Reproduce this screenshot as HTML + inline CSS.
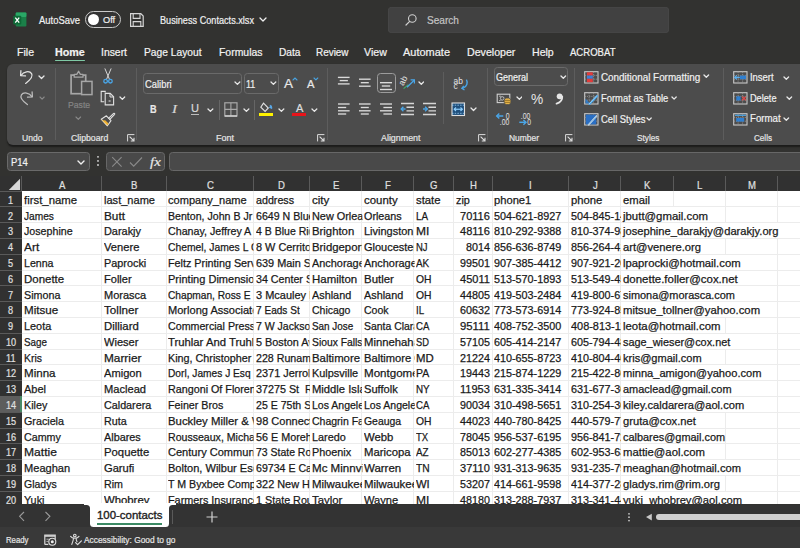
<!DOCTYPE html>
<html><head><meta charset="utf-8"><style>
*{box-sizing:border-box;margin:0;padding:0}
html,body{width:800px;height:548px;overflow:hidden;background:#323230;font-family:"Liberation Sans",sans-serif;position:relative}
.a{position:absolute}
.t{position:absolute;white-space:pre}
</style></head><body>
<svg class="a" style="left:12px;top:12px;" width="16" height="16" viewBox="0 0 16 16"><rect x="3.7" y="0.6" width="10.7" height="13.8" rx="1" fill="#1b8049"/><rect x="3.7" y="0.6" width="10.7" height="4.5" rx="1" fill="#2aa866"/><rect x="1.2" y="3.7" width="8.1" height="8.7" rx="1" fill="#0e6a37"/><path d="M3.3 5.6l3.9 5M7.2 5.6l-3.9 5" stroke="#fff" stroke-width="1.3"/></svg>
<div class="a" style="left:84.8px;top:11.4px;width:36.3px;height:16.8px;border:1.4px solid #c9c9c9;border-radius:9px;background:#333"></div>
<div class="a" style="left:87.7px;top:14px;width:11.3px;height:11.3px;background:#fff;border-radius:50%"></div>
<svg class="a" style="left:129px;top:12px;" width="16" height="16" viewBox="0 0 16 16"><path d="M1.6 1.6h10.2l2.4 2.4v10.4H1.6z" fill="none" stroke="#d6d6d6" stroke-width="1.2"/><path d="M4.2 1.6v4.8h6.8V1.6" fill="none" stroke="#d6d6d6" stroke-width="1.1"/><path d="M4.2 14.4V9.6h7.6v4.8" fill="none" stroke="#d6d6d6" stroke-width="1.1"/></svg>
<svg class="a" style="left:258.5px;top:16.5px;" width="8" height="5.0" viewBox="0 0 8 5.0"><path d="M1 1L4.0 4.0L7 1" fill="none" stroke="#f0f0f0" stroke-width="1.3" stroke-linecap="round" stroke-linejoin="round"/></svg>
<div class="a" style="left:388px;top:7px;width:281px;height:26px;background:#414141;border-radius:4px;box-shadow:inset 0 0 0 0.6px #4a4a4a"></div>
<svg class="a" style="left:403.5px;top:12.5px;" width="14" height="14" viewBox="0 0 14 14"><circle cx="8.3" cy="5.5" r="3.8" fill="none" stroke="#d0d0d0" stroke-width="1.1"/><path d="M5.7 8.3L2 12" stroke="#d0d0d0" stroke-width="1.2" stroke-linecap="round"/></svg>
<div class="a" style="left:54.8px;top:59.5px;width:30.5px;height:1.9px;background:#7fc9a5;border-radius:1px"></div>
<div class="a" style="left:7px;top:64px;width:800px;height:80.8px;background:#4c4c4c;border-radius:6px;box-shadow:0 1.5px 1.5px rgba(0,0,0,0.45)"></div>
<div class="a" style="left:54.8px;top:68px;width:1px;height:71.5px;background:#5d5d5d"></div>
<div class="a" style="left:136.0px;top:68px;width:1px;height:71.5px;background:#5d5d5d"></div>
<div class="a" style="left:326.7px;top:68px;width:1px;height:71.5px;background:#5d5d5d"></div>
<div class="a" style="left:487.15px;top:68px;width:1px;height:71.5px;background:#5d5d5d"></div>
<div class="a" style="left:574.0px;top:68px;width:1px;height:71.5px;background:#5d5d5d"></div>
<div class="a" style="left:723.0px;top:68px;width:1px;height:71.5px;background:#5d5d5d"></div>
<svg class="a" style="left:127px;top:133.5px;" width="8" height="8" viewBox="0 0 8 8"><path d="M0.6 7.4V0.6h6.8" fill="none" stroke="#dcdcdc" stroke-width="1"/><path d="M2.6 2.6L7 7M7 3.8V7H3.8" fill="none" stroke="#dcdcdc" stroke-width="1.1"/></svg>
<svg class="a" style="left:317.3px;top:133.5px;" width="8" height="8" viewBox="0 0 8 8"><path d="M0.6 7.4V0.6h6.8" fill="none" stroke="#dcdcdc" stroke-width="1"/><path d="M2.6 2.6L7 7M7 3.8V7H3.8" fill="none" stroke="#dcdcdc" stroke-width="1.1"/></svg>
<svg class="a" style="left:477.6px;top:133.5px;" width="8" height="8" viewBox="0 0 8 8"><path d="M0.6 7.4V0.6h6.8" fill="none" stroke="#dcdcdc" stroke-width="1"/><path d="M2.6 2.6L7 7M7 3.8V7H3.8" fill="none" stroke="#dcdcdc" stroke-width="1.1"/></svg>
<svg class="a" style="left:564.8px;top:133.5px;" width="8" height="8" viewBox="0 0 8 8"><path d="M0.6 7.4V0.6h6.8" fill="none" stroke="#dcdcdc" stroke-width="1"/><path d="M2.6 2.6L7 7M7 3.8V7H3.8" fill="none" stroke="#dcdcdc" stroke-width="1.1"/></svg>
<svg class="a" style="left:18px;top:68px;" width="17" height="18" viewBox="0 0 17 18"><path d="M3.1 7.4C5.6 3.5 11.5 2.3 13.6 5.7C15.3 8.5 12 12.2 7.6 15.4" fill="none" stroke="#e3e3e3" stroke-width="1.25" stroke-linecap="round"/><path d="M2.9 2.7L2.6 7.6L7.5 7.9" fill="none" stroke="#e3e3e3" stroke-width="1.25" stroke-linecap="round" stroke-linejoin="round"/></svg>
<svg class="a" style="left:38.2px;top:75.3px;" width="7" height="4.5" viewBox="0 0 7 4.5"><path d="M1 1L3.5 3.5L6 1" fill="none" stroke="#e8e8e8" stroke-width="1.3" stroke-linecap="round" stroke-linejoin="round"/></svg>
<svg class="a" style="left:18px;top:89px;" width="17" height="18" viewBox="0 0 17 18"><path d="M13.9 7.6C11.4 3.7 5.5 2.5 3.4 5.9C1.7 8.7 5 12.4 9.4 15.6" fill="none" stroke="#bdbdbd" stroke-width="1.25" stroke-linecap="round"/><path d="M14.1 2.9L14.4 7.8L9.5 8.1" fill="none" stroke="#bdbdbd" stroke-width="1.25" stroke-linecap="round" stroke-linejoin="round"/></svg>
<svg class="a" style="left:39px;top:96px;" width="6.2" height="4.1" viewBox="0 0 6.2 4.1"><path d="M1 1L3.1 3.1L5.2 1" fill="none" stroke="#8a8a8a" stroke-width="1.1" stroke-linecap="round" stroke-linejoin="round"/></svg>
<svg class="a" style="left:68px;top:69px;" width="27" height="28" viewBox="0 0 27 28"><rect x="3.1" y="6.1" width="14.6" height="18.6" fill="none" stroke="#a6a6a6" stroke-width="1.7"/><path d="M6.2 8.2V5.4h2.6l1.8-3.2l1.8 3.2h2.6v2.8z" fill="#4c4c4c" stroke="#a6a6a6" stroke-width="1.3" stroke-linejoin="round"/><rect x="13.6" y="12.4" width="10.4" height="13.2" fill="#4c4c4c" stroke="#a6a6a6" stroke-width="1.5"/></svg>
<svg class="a" style="left:75.4px;top:115.8px;" width="6.6" height="4.3" viewBox="0 0 6.6 4.3"><path d="M1 1L3.3 3.3L5.6 1" fill="none" stroke="#8a8a8a" stroke-width="1.1" stroke-linecap="round" stroke-linejoin="round"/></svg>
<svg class="a" style="left:102px;top:68px;" width="12" height="17" viewBox="0 0 12 17"><path d="M3 0.8L7.4 11.2M9 0.8L4.6 11.2" stroke="#d8d8d8" stroke-width="1" stroke-linecap="round"/><circle cx="3.6" cy="13.2" r="1.8" fill="none" stroke="#4aa6e8" stroke-width="1.3"/><circle cx="8.4" cy="13.2" r="1.8" fill="none" stroke="#4aa6e8" stroke-width="1.3"/></svg>
<svg class="a" style="left:100px;top:90px;" width="16" height="16" viewBox="0 0 16 16"><path d="M5.2 2.5V1.4H1.2v10.4h3" fill="none" stroke="#e0e0e0" stroke-width="1.1"/><path d="M5.2 3.4h5l3.4 3.4v8.1H5.2z" fill="none" stroke="#e0e0e0" stroke-width="1.1"/><path d="M10 3.4v3.6h3.6" fill="none" stroke="#e0e0e0" stroke-width="1"/><rect x="8.6" y="10" width="2" height="2" fill="#9a9a9a"/></svg>
<svg class="a" style="left:119.3px;top:96.3px;" width="6.7" height="4.35" viewBox="0 0 6.7 4.35"><path d="M1 1L3.35 3.35L5.7 1" fill="none" stroke="#e8e8e8" stroke-width="1.3" stroke-linecap="round" stroke-linejoin="round"/></svg>
<svg class="a" style="left:99px;top:111px;" width="17" height="17" viewBox="0 0 17 17"><path d="M9.2 7.6L14.6 2.4c0.6-0.5 1.5 0.3 1 0.9L10.4 8.8" fill="none" stroke="#e2e2e2" stroke-width="1.1"/><path d="M2.2 8.2L7.4 4.8L12 9.6L8.4 14.8z" fill="none" stroke="#e2e2e2" stroke-width="1.1" stroke-linejoin="round"/><path d="M3.4 9.4L6.2 9.2L9.6 12.6L8.4 14.2z" fill="#f0b030"/><path d="M2.6 8.6l5.6 5.8" stroke="#f7d27a" stroke-width="0.9"/></svg>
<div class="a" style="left:143.25px;top:73px;width:98.65px;height:21px;border:1.2px solid #6a6a6a;border-radius:3.5px"></div>
<svg class="a" style="left:234px;top:81.2px;" width="6.8" height="4.4" viewBox="0 0 6.8 4.4"><path d="M1 1L3.4 3.4L5.8 1" fill="none" stroke="#e8e8e8" stroke-width="1.3" stroke-linecap="round" stroke-linejoin="round"/></svg>
<div class="a" style="left:243.75px;top:73px;width:34.75px;height:20.75px;border:1.2px solid #6a6a6a;border-radius:3.5px"></div>
<svg class="a" style="left:270px;top:81.2px;" width="6.8" height="4.4" viewBox="0 0 6.8 4.4"><path d="M1 1L3.4 3.4L5.8 1" fill="none" stroke="#e8e8e8" stroke-width="1.3" stroke-linecap="round" stroke-linejoin="round"/></svg>
<svg class="a" style="left:291.5px;top:76.5px;" width="6" height="4" viewBox="0 0 6 4"><path d="M1 3L3 1L5 3" fill="none" stroke="#49a3e0" stroke-width="1.1" stroke-linecap="round"/></svg>
<svg class="a" style="left:313px;top:77.2px;" width="5.8" height="3.9" viewBox="0 0 5.8 3.9"><path d="M1 1L2.9 2.9L4.8 1" fill="none" stroke="#49a3e0" stroke-width="1.1" stroke-linecap="round" stroke-linejoin="round"/></svg>
<div class="a" style="left:191px;top:114px;width:8px;height:1.2px;background:#bcbcbc"></div>
<svg class="a" style="left:207px;top:107.6px;" width="6.8" height="4.4" viewBox="0 0 6.8 4.4"><path d="M1 1L3.4 3.4L5.8 1" fill="none" stroke="#e8e8e8" stroke-width="1.3" stroke-linecap="round" stroke-linejoin="round"/></svg>
<div class="a" style="left:218.6px;top:100.3px;width:1px;height:19.3px;background:#666"></div>
<svg class="a" style="left:223.5px;top:101.5px;" width="14" height="15" viewBox="0 0 14 15"><rect x="0.8" y="0.8" width="12.2" height="13.2" fill="none" stroke="#a9a9a9" stroke-width="1.2"/><path d="M6.9 0.8v13.2M0.8 7.4h12.2" stroke="#a9a9a9" stroke-width="1.1"/><path d="M0.8 14h12.2" stroke="#d6d6d6" stroke-width="1.4"/></svg>
<svg class="a" style="left:242.8px;top:107.6px;" width="6.8" height="4.4" viewBox="0 0 6.8 4.4"><path d="M1 1L3.4 3.4L5.8 1" fill="none" stroke="#e8e8e8" stroke-width="1.3" stroke-linecap="round" stroke-linejoin="round"/></svg>
<div class="a" style="left:254.2px;top:100.3px;width:1px;height:19.3px;background:#666"></div>
<svg class="a" style="left:260px;top:102px;" width="14" height="11" viewBox="0 0 14 11"><path d="M3.5 1.2l4.8 4.8-3.2 3.4-4.3-4.3z" fill="none" stroke="#e2e2e2" stroke-width="1.1"/><path d="M9.8 3.3c1.3 0.6 2 2 1.6 3.4" fill="none" stroke="#5aa8e6" stroke-width="1.4"/><path d="M11.4 3.2l0.3 3.5-3-1.2z" fill="#5aa8e6"/></svg>
<div class="a" style="left:259.4px;top:113px;width:13.6px;height:3px;background:#fff200"></div>
<svg class="a" style="left:277.75px;top:107.6px;" width="6.8" height="4.4" viewBox="0 0 6.8 4.4"><path d="M1 1L3.4 3.4L5.8 1" fill="none" stroke="#e8e8e8" stroke-width="1.3" stroke-linecap="round" stroke-linejoin="round"/></svg>
<div class="a" style="left:292px;top:113px;width:14px;height:3px;background:#e8141a"></div>
<svg class="a" style="left:311px;top:107.6px;" width="6.8" height="4.4" viewBox="0 0 6.8 4.4"><path d="M1 1L3.4 3.4L5.8 1" fill="none" stroke="#e8e8e8" stroke-width="1.3" stroke-linecap="round" stroke-linejoin="round"/></svg>
<svg class="a" style="left:336px;top:70px;" width="16" height="50" viewBox="0 0 16 50"><path d="M1.90 7.40H13.60" stroke="#dadada" stroke-width="1.35"/><path d="M3.70 10.60H11.90" stroke="#dadada" stroke-width="1.35"/><path d="M1.90 13.90H13.60" stroke="#dadada" stroke-width="1.35"/></svg>
<svg class="a" style="left:357px;top:70px;" width="16" height="50" viewBox="0 0 16 50"><path d="M2.00 9.20H13.60" stroke="#dadada" stroke-width="1.35"/><path d="M3.80 12.70H11.80" stroke="#dadada" stroke-width="1.35"/><path d="M2.00 16.20H13.60" stroke="#dadada" stroke-width="1.35"/></svg>
<div class="a" style="left:376.5px;top:73.3px;width:19.25px;height:19.3px;border:1.3px solid #9c9c9c;border-radius:3.5px;background:#4f4f4f"></div>
<svg class="a" style="left:378px;top:70px;" width="16" height="50" viewBox="0 0 16 50"><path d="M2.00 12.70H14.00" stroke="#dadada" stroke-width="1.35"/><path d="M3.80 16.00H12.20" stroke="#dadada" stroke-width="1.35"/><path d="M2.00 19.50H14.00" stroke="#dadada" stroke-width="1.35"/></svg>
<svg class="a" style="left:336px;top:70px;" width="16" height="50" viewBox="0 0 16 50"><path d="M2.00 34.00H13.60" stroke="#dadada" stroke-width="1.35"/><path d="M2.00 37.50H10.20" stroke="#dadada" stroke-width="1.35"/><path d="M2.00 40.80H13.60" stroke="#dadada" stroke-width="1.35"/><path d="M2.00 44.00H10.20" stroke="#dadada" stroke-width="1.35"/></svg>
<svg class="a" style="left:357px;top:70px;" width="16" height="50" viewBox="0 0 16 50"><path d="M2.00 34.00H13.60" stroke="#dadada" stroke-width="1.35"/><path d="M3.80 37.50H11.80" stroke="#dadada" stroke-width="1.35"/><path d="M2.00 40.80H13.60" stroke="#dadada" stroke-width="1.35"/><path d="M3.80 44.00H11.80" stroke="#dadada" stroke-width="1.35"/></svg>
<svg class="a" style="left:378px;top:70px;" width="16" height="50" viewBox="0 0 16 50"><path d="M2.00 34.00H14.00" stroke="#dadada" stroke-width="1.35"/><path d="M5.40 37.50H14.00" stroke="#dadada" stroke-width="1.35"/><path d="M2.00 40.80H14.00" stroke="#dadada" stroke-width="1.35"/><path d="M5.40 44.00H14.00" stroke="#dadada" stroke-width="1.35"/></svg>
<svg class="a" style="left:398px;top:73px;" width="18" height="18" viewBox="0 0 18 18"><text x="0" y="0" transform="translate(5.2 13.2) rotate(-62)" font-family="Liberation Sans" font-size="8.6" fill="#e6e6e6">ab</text><path d="M5.6 15.6L10.4 11.6" stroke="#3fae6a" stroke-width="1.2"/><path d="M9 14.2L16.2 7.2" stroke="#4aa6e8" stroke-width="1.3"/><path d="M12.6 6.8h3.8v3.8" fill="none" stroke="#4aa6e8" stroke-width="1.2"/></svg>
<svg class="a" style="left:417.7px;top:81.2px;" width="6.6" height="4.3" viewBox="0 0 6.6 4.3"><path d="M1 1L3.3 3.3L5.6 1" fill="none" stroke="#e8e8e8" stroke-width="1.3" stroke-linecap="round" stroke-linejoin="round"/></svg>
<svg class="a" style="left:400px;top:102px;" width="15" height="14" viewBox="0 0 15 14"><path d="M1 1.5h13M6.5 5.2h7.5M6.5 8.8h7.5M1 12.5h13" stroke="#d6d6d6" stroke-width="1.35"/><path d="M1.2 7H5.5" stroke="#4aa6e8" stroke-width="1.4"/><path d="M3.4 4.8L1.2 7l2.2 2.2" fill="none" stroke="#4aa6e8" stroke-width="1.3"/></svg>
<svg class="a" style="left:421.5px;top:102px;" width="15" height="14" viewBox="0 0 15 14"><path d="M1 1.5h13M6.5 5.2h7.5M6.5 8.8h7.5M1 12.5h13" stroke="#d6d6d6" stroke-width="1.35"/><path d="M1 7H5.3" stroke="#4aa6e8" stroke-width="1.4"/><path d="M3.1 4.8L5.3 7L3.1 9.2" fill="none" stroke="#4aa6e8" stroke-width="1.3"/></svg>
<div class="a" style="left:443px;top:72px;width:1px;height:51.5px;background:#5d5d5d"></div>
<svg class="a" style="left:452px;top:75px;" width="17" height="17" viewBox="0 0 17 17"><text x="1.6" y="8.6" font-family="Liberation Sans" font-size="8.4" fill="#e6e6e6">ab</text><text x="1.6" y="14.3" font-family="Liberation Sans" font-size="8.4" fill="#e6e6e6">c</text><path d="M14.4 4.6c1.6 2.8 0.8 7.2-3.8 8.8" fill="none" stroke="#4aa6e8" stroke-width="1.4"/><path d="M11.8 10.9l-2 2.5 2.7 1.6" fill="none" stroke="#4aa6e8" stroke-width="1.3"/></svg>
<svg class="a" style="left:451px;top:102px;" width="15" height="15" viewBox="0 0 15 15"><rect x="1" y="1" width="12.5" height="12.5" fill="#1f4f7c" stroke="#e0e0e0" stroke-width="1.1"/><path d="M3.2 7.25h8.1" stroke="#8fd0ff" stroke-width="1.2"/><path d="M5 5.5L3.2 7.25 5 9M9.5 5.5l1.8 1.75L9.5 9" fill="none" stroke="#8fd0ff" stroke-width="1.1"/><path d="M1 3.2h12.5M1 11.3h12.5" stroke="#9dd2f7" stroke-width="0.8" stroke-dasharray="1.5 1.2"/></svg>
<svg class="a" style="left:470.2px;top:107px;" width="7" height="4.5" viewBox="0 0 7 4.5"><path d="M1 1L3.5 3.5L6 1" fill="none" stroke="#e8e8e8" stroke-width="1.3" stroke-linecap="round" stroke-linejoin="round"/></svg>
<div class="a" style="left:494.4px;top:67.3px;width:74.1px;height:18.9px;border:1.2px solid #6a6a6a;border-radius:3.5px"></div>
<svg class="a" style="left:560px;top:74.8px;" width="6.6" height="4.3" viewBox="0 0 6.6 4.3"><path d="M1 1L3.3 3.3L5.6 1" fill="none" stroke="#e8e8e8" stroke-width="1.3" stroke-linecap="round" stroke-linejoin="round"/></svg>
<svg class="a" style="left:496px;top:93px;" width="17" height="13" viewBox="0 0 17 13"><rect x="1.2" y="1.2" width="12.6" height="8.4" fill="none" stroke="#d0d0d0" stroke-width="1.1"/><path d="M3 3.2h2M3 7.6h1.6" stroke="#bdbdbd" stroke-width="0.9"/><circle cx="6.2" cy="5.4" r="1.8" fill="none" stroke="#c8c8c8" stroke-width="0.9"/><rect x="8.2" y="5" width="6.6" height="6.6" rx="2.4" fill="#e8b64a" stroke="#4c4c4c" stroke-width="0.8"/><path d="M8.6 7.4h5.8M8.6 9.4h5.8" stroke="#7a5a18" stroke-width="0.7"/></svg>
<svg class="a" style="left:515.6px;top:95.8px;" width="6.8" height="4.4" viewBox="0 0 6.8 4.4"><path d="M1 1L3.4 3.4L5.8 1" fill="none" stroke="#e8e8e8" stroke-width="1.3" stroke-linecap="round" stroke-linejoin="round"/></svg>
<svg class="a" style="left:554px;top:92px;" width="10" height="13" viewBox="0 0 10 13"><circle cx="5.6" cy="4.3" r="2.9" fill="#e6e6e6"/><path d="M8.2 4.6C8.4 8 6.2 10.4 2.6 11.6" fill="none" stroke="#e6e6e6" stroke-width="1.9" stroke-linecap="round"/></svg>
<svg class="a" style="left:495px;top:111px;" width="17" height="15" viewBox="0 0 17 15"><text x="13.4" y="7.8" font-family="Liberation Sans" font-size="8.6" fill="#e0e0e0" transform="scale(0.8 1)">0</text><text x="6" y="14.2" font-family="Liberation Sans" font-size="8.6" fill="#e0e0e0" transform="scale(0.8 1)">.00</text><path d="M1.8 5h6.5" stroke="#4aa6e8" stroke-width="1.5"/><path d="M4.3 2.6L1.7 5l2.6 2.4" fill="none" stroke="#4aa6e8" stroke-width="1.4"/></svg>
<svg class="a" style="left:518px;top:111px;" width="17" height="15" viewBox="0 0 17 15"><text x="3.5" y="7.8" font-family="Liberation Sans" font-size="8.6" fill="#e0e0e0" transform="scale(0.8 1)">.00</text><text x="11.5" y="14.2" font-family="Liberation Sans" font-size="8.6" fill="#e0e0e0" transform="scale(0.8 1)">0</text><path d="M1.3 11.3h6.5" stroke="#4aa6e8" stroke-width="1.5"/><path d="M5.4 8.9L8 11.3 5.4 13.7" fill="none" stroke="#4aa6e8" stroke-width="1.4"/></svg>
<svg class="a" style="left:583.5px;top:70.5px;" width="15" height="13" viewBox="0 0 15 13"><rect x="0.7" y="0.7" width="13.3" height="11.3" fill="none" stroke="#c9c9c9" stroke-width="1.1"/><path d="M0.7 4.4h13.3M0.7 8.2h13.3M5.1 0.7v11.3M9.6 0.7v11.3" stroke="#9a9a9a" stroke-width="0.8" stroke-dasharray="1.2 1"/><rect x="2.9" y="1.3" width="5.9" height="3.3" fill="#e23b3b"/><rect x="2.9" y="4.6" width="5.9" height="3.2" fill="#3b7fd6"/><rect x="2.9" y="7.8" width="5.9" height="3.4" fill="#e23b3b"/></svg>
<svg class="a" style="left:703.2px;top:74px;" width="6.6" height="4.3" viewBox="0 0 6.6 4.3"><path d="M1 1L3.3 3.3L5.6 1" fill="none" stroke="#e8e8e8" stroke-width="1.3" stroke-linecap="round" stroke-linejoin="round"/></svg>
<svg class="a" style="left:583.5px;top:91.5px;" width="15" height="13" viewBox="0 0 15 13"><rect x="0.7" y="0.7" width="13.3" height="11.3" fill="none" stroke="#c9c9c9" stroke-width="1.1"/><path d="M0.7 4.4h13.3M0.7 8.2h13.3M5.1 0.7v11.3M9.6 0.7v11.3" stroke="#9a9a9a" stroke-width="0.8" stroke-dasharray="1.2 1"/><path d="M1.5 6.5L6 11.5H1.5z" fill="#2f7fd0" opacity="0.9"/><path d="M4.2 12.3L12.8 2.8L14.3 4.2L5.7 13.3z" fill="#4aa6e8"/><path d="M5 12L13 3.5" stroke="#cfe9ff" stroke-width="0.6"/></svg>
<svg class="a" style="left:670.5px;top:95.8px;" width="6.2" height="4.1" viewBox="0 0 6.2 4.1"><path d="M1 1L3.1 3.1L5.2 1" fill="none" stroke="#e8e8e8" stroke-width="1.3" stroke-linecap="round" stroke-linejoin="round"/></svg>
<svg class="a" style="left:583.5px;top:112.5px;" width="15" height="13" viewBox="0 0 15 13"><rect x="0.7" y="0.7" width="13.3" height="11.3" fill="none" stroke="#c9c9c9" stroke-width="1.1"/><path d="M0.7 4.4h13.3M0.7 8.2h13.3M5.1 0.7v11.3M9.6 0.7v11.3" stroke="#9a9a9a" stroke-width="0.8" stroke-dasharray="1.2 1"/><rect x="1.8" y="1.6" width="10.5" height="9.8" fill="#2a6fc4"/><path d="M4.2 12.3L13 2.6" stroke="#e8e8e8" stroke-width="1.5"/><path d="M4.2 12.3L13 2.6" stroke="#4aa6e8" stroke-width="0.6"/></svg>
<svg class="a" style="left:646px;top:116.8px;" width="6.2" height="4.1" viewBox="0 0 6.2 4.1"><path d="M1 1L3.1 3.1L5.2 1" fill="none" stroke="#e8e8e8" stroke-width="1.3" stroke-linecap="round" stroke-linejoin="round"/></svg>
<svg class="a" style="left:732.5px;top:70.5px;" width="15" height="13" viewBox="0 0 15 13"><rect x="0.7" y="0.7" width="13.3" height="11.3" fill="none" stroke="#c9c9c9" stroke-width="1.1"/><path d="M0.7 4.4h13.3M0.7 8.2h13.3M5.1 0.7v11.3M9.6 0.7v11.3" stroke="#9a9a9a" stroke-width="0.8" stroke-dasharray="1.2 1"/><rect x="7" y="4.6" width="6" height="3.6" fill="#2f7fd0"/><path d="M1.8 6.4h5" stroke="#5ab0f0" stroke-width="1.3"/><path d="M3.8 4.4l-2 2 2 2" fill="none" stroke="#5ab0f0" stroke-width="1.2"/></svg>
<svg class="a" style="left:783px;top:75.5px;" width="6.6" height="4.3" viewBox="0 0 6.6 4.3"><path d="M1 1L3.3 3.3L5.6 1" fill="none" stroke="#e8e8e8" stroke-width="1.3" stroke-linecap="round" stroke-linejoin="round"/></svg>
<svg class="a" style="left:732.5px;top:91.5px;" width="15" height="13" viewBox="0 0 15 13"><rect x="0.7" y="0.7" width="13.3" height="11.3" fill="none" stroke="#c9c9c9" stroke-width="1.1"/><path d="M0.7 4.4h13.3M0.7 8.2h13.3M5.1 0.7v11.3M9.6 0.7v11.3" stroke="#9a9a9a" stroke-width="0.8" stroke-dasharray="1.2 1"/><rect x="3.3" y="4.3" width="4.3" height="4.2" fill="#2f7fd0"/><path d="M9.2 4.6l3.6 3.6M12.8 4.6L9.2 8.2" stroke="#e04848" stroke-width="1.3"/></svg>
<svg class="a" style="left:786px;top:96px;" width="6.6" height="4.3" viewBox="0 0 6.6 4.3"><path d="M1 1L3.3 3.3L5.6 1" fill="none" stroke="#e8e8e8" stroke-width="1.3" stroke-linecap="round" stroke-linejoin="round"/></svg>
<svg class="a" style="left:732.5px;top:112.5px;" width="15" height="13" viewBox="0 0 15 13"><rect x="0.7" y="0.7" width="13.3" height="11.3" fill="none" stroke="#c9c9c9" stroke-width="1.1"/><path d="M0.7 4.4h13.3M0.7 8.2h13.3M5.1 0.7v11.3M9.6 0.7v11.3" stroke="#9a9a9a" stroke-width="0.8" stroke-dasharray="1.2 1"/><rect x="3.2" y="5" width="8" height="3.6" fill="#2f7fd0"/><path d="M2 2.3h11" stroke="#4aa6e8" stroke-width="1.2"/></svg>
<svg class="a" style="left:783px;top:116.8px;" width="6.6" height="4.3" viewBox="0 0 6.6 4.3"><path d="M1 1L3.3 3.3L5.6 1" fill="none" stroke="#e8e8e8" stroke-width="1.3" stroke-linecap="round" stroke-linejoin="round"/></svg>
<div class="a" style="left:7.2px;top:152px;width:82.4px;height:18.6px;background:#494949;border:1.1px solid #6a6a6a;border-radius:3.5px"></div>
<svg class="a" style="left:77px;top:159.8px;" width="8" height="5.0" viewBox="0 0 8 5.0"><path d="M1 1L4.0 4.0L7 1" fill="none" stroke="#f0f0f0" stroke-width="1.4" stroke-linecap="round" stroke-linejoin="round"/></svg>
<svg class="a" style="left:95.5px;top:155px;" width="4" height="12" viewBox="0 0 4 12"><circle cx="2" cy="1.8" r="0.9" fill="#dcdcdc"/><circle cx="2" cy="5.9" r="0.9" fill="#dcdcdc"/><circle cx="2" cy="10" r="0.9" fill="#dcdcdc"/></svg>
<div class="a" style="left:105.9px;top:152px;width:59.6px;height:18.6px;background:#494949;border:1.1px solid #676767;border-radius:3.5px"></div>
<svg class="a" style="left:110.5px;top:156px;" width="12" height="12" viewBox="0 0 12 12"><path d="M1.2 1.2l9.4 9.4M10.6 1.2L1.2 10.6" stroke="#8a8a8a" stroke-width="1.1"/></svg>
<svg class="a" style="left:129px;top:156px;" width="14" height="12" viewBox="0 0 14 12"><path d="M1 6.5l3.7 3.7L13 1.5" fill="none" stroke="#8a8a8a" stroke-width="1.1"/></svg>
<div class="a" style="left:168.9px;top:152px;width:640px;height:18.6px;background:#494949;border:1.1px solid #676767;border-radius:3.5px"></div>
<div class="a" style="left:0;top:176px;width:800px;height:15px;background:#313131"></div>
<svg class="a" style="left:8px;top:178px;" width="13" height="13" viewBox="0 0 13 13"><path d="M12 0.8V12H0.8z" fill="#d9d9d9"/></svg>
<div class="a" style="left:21.25px;top:176px;width:1px;height:15px;background:#5a5a5a"></div>
<div class="a" style="left:101.0px;top:176px;width:1px;height:15px;background:#5a5a5a"></div>
<div class="a" style="left:165.75px;top:176px;width:1px;height:15px;background:#5a5a5a"></div>
<div class="a" style="left:253.25px;top:176px;width:1px;height:15px;background:#5a5a5a"></div>
<div class="a" style="left:309.0px;top:176px;width:1px;height:15px;background:#5a5a5a"></div>
<div class="a" style="left:361.0px;top:176px;width:1px;height:15px;background:#5a5a5a"></div>
<div class="a" style="left:413.25px;top:176px;width:1px;height:15px;background:#5a5a5a"></div>
<div class="a" style="left:453.25px;top:176px;width:1px;height:15px;background:#5a5a5a"></div>
<div class="a" style="left:491.5px;top:176px;width:1px;height:15px;background:#5a5a5a"></div>
<div class="a" style="left:568.25px;top:176px;width:1px;height:15px;background:#5a5a5a"></div>
<div class="a" style="left:620.25px;top:176px;width:1px;height:15px;background:#5a5a5a"></div>
<div class="a" style="left:672.5px;top:176px;width:1px;height:15px;background:#5a5a5a"></div>
<div class="a" style="left:724.5px;top:176px;width:1px;height:15px;background:#5a5a5a"></div>
<div class="a" style="left:777.0px;top:176px;width:1px;height:15px;background:#5a5a5a"></div>
<div class="a" style="left:0;top:190.5px;width:800px;height:1px;background:#5a5a5a"></div>
<div class="a" style="left:0;top:191px;width:21.75px;height:313px;background:#313131"></div>
<div class="a" style="left:21.75px;top:191px;width:800px;height:313px;background:#fff;overflow:hidden">
<div class="a" style="left:0;top:15px;width:800px;height:1px;background:#ececec"></div>
<div class="a" style="left:0;top:31px;width:800px;height:1px;background:#ececec"></div>
<div class="a" style="left:0;top:47px;width:800px;height:1px;background:#ececec"></div>
<div class="a" style="left:0;top:63px;width:800px;height:1px;background:#ececec"></div>
<div class="a" style="left:0;top:79px;width:800px;height:1px;background:#ececec"></div>
<div class="a" style="left:0;top:94px;width:800px;height:1px;background:#ececec"></div>
<div class="a" style="left:0;top:110px;width:800px;height:1px;background:#ececec"></div>
<div class="a" style="left:0;top:126px;width:800px;height:1px;background:#ececec"></div>
<div class="a" style="left:0;top:142px;width:800px;height:1px;background:#ececec"></div>
<div class="a" style="left:0;top:158px;width:800px;height:1px;background:#ececec"></div>
<div class="a" style="left:0;top:173px;width:800px;height:1px;background:#ececec"></div>
<div class="a" style="left:0;top:189px;width:800px;height:1px;background:#ececec"></div>
<div class="a" style="left:0;top:205px;width:800px;height:1px;background:#ececec"></div>
<div class="a" style="left:0;top:221px;width:800px;height:1px;background:#ececec"></div>
<div class="a" style="left:0;top:237px;width:800px;height:1px;background:#ececec"></div>
<div class="a" style="left:0;top:252px;width:800px;height:1px;background:#ececec"></div>
<div class="a" style="left:0;top:268px;width:800px;height:1px;background:#ececec"></div>
<div class="a" style="left:0;top:284px;width:800px;height:1px;background:#ececec"></div>
<div class="a" style="left:0;top:300px;width:800px;height:1px;background:#ececec"></div>
<div class="a" style="left:0;top:316px;width:800px;height:1px;background:#ececec"></div>
<div class="a" style="left:79.25px;top:0.00px;width:1px;height:15.80px;background:#ececec"></div>
<div class="a" style="left:79.25px;top:15.80px;width:1px;height:15.80px;background:#ececec"></div>
<div class="a" style="left:79.25px;top:31.60px;width:1px;height:15.80px;background:#ececec"></div>
<div class="a" style="left:79.25px;top:47.40px;width:1px;height:15.80px;background:#ececec"></div>
<div class="a" style="left:79.25px;top:63.20px;width:1px;height:15.80px;background:#ececec"></div>
<div class="a" style="left:79.25px;top:79.00px;width:1px;height:15.80px;background:#ececec"></div>
<div class="a" style="left:79.25px;top:94.80px;width:1px;height:15.80px;background:#ececec"></div>
<div class="a" style="left:79.25px;top:110.60px;width:1px;height:15.80px;background:#ececec"></div>
<div class="a" style="left:79.25px;top:126.40px;width:1px;height:15.80px;background:#ececec"></div>
<div class="a" style="left:79.25px;top:142.20px;width:1px;height:15.80px;background:#ececec"></div>
<div class="a" style="left:79.25px;top:158.00px;width:1px;height:15.80px;background:#ececec"></div>
<div class="a" style="left:79.25px;top:173.80px;width:1px;height:15.80px;background:#ececec"></div>
<div class="a" style="left:79.25px;top:189.60px;width:1px;height:15.80px;background:#ececec"></div>
<div class="a" style="left:79.25px;top:205.40px;width:1px;height:15.80px;background:#ececec"></div>
<div class="a" style="left:79.25px;top:221.20px;width:1px;height:15.80px;background:#ececec"></div>
<div class="a" style="left:79.25px;top:237.00px;width:1px;height:15.80px;background:#ececec"></div>
<div class="a" style="left:79.25px;top:252.80px;width:1px;height:15.80px;background:#ececec"></div>
<div class="a" style="left:79.25px;top:268.60px;width:1px;height:15.80px;background:#ececec"></div>
<div class="a" style="left:79.25px;top:284.40px;width:1px;height:15.80px;background:#ececec"></div>
<div class="a" style="left:79.25px;top:300.20px;width:1px;height:15.80px;background:#ececec"></div>
<div class="a" style="left:144.00px;top:0.00px;width:1px;height:15.80px;background:#ececec"></div>
<div class="a" style="left:144.00px;top:15.80px;width:1px;height:15.80px;background:#ececec"></div>
<div class="a" style="left:144.00px;top:31.60px;width:1px;height:15.80px;background:#ececec"></div>
<div class="a" style="left:144.00px;top:47.40px;width:1px;height:15.80px;background:#ececec"></div>
<div class="a" style="left:144.00px;top:63.20px;width:1px;height:15.80px;background:#ececec"></div>
<div class="a" style="left:144.00px;top:79.00px;width:1px;height:15.80px;background:#ececec"></div>
<div class="a" style="left:144.00px;top:94.80px;width:1px;height:15.80px;background:#ececec"></div>
<div class="a" style="left:144.00px;top:110.60px;width:1px;height:15.80px;background:#ececec"></div>
<div class="a" style="left:144.00px;top:126.40px;width:1px;height:15.80px;background:#ececec"></div>
<div class="a" style="left:144.00px;top:142.20px;width:1px;height:15.80px;background:#ececec"></div>
<div class="a" style="left:144.00px;top:158.00px;width:1px;height:15.80px;background:#ececec"></div>
<div class="a" style="left:144.00px;top:173.80px;width:1px;height:15.80px;background:#ececec"></div>
<div class="a" style="left:144.00px;top:189.60px;width:1px;height:15.80px;background:#ececec"></div>
<div class="a" style="left:144.00px;top:205.40px;width:1px;height:15.80px;background:#ececec"></div>
<div class="a" style="left:144.00px;top:221.20px;width:1px;height:15.80px;background:#ececec"></div>
<div class="a" style="left:144.00px;top:237.00px;width:1px;height:15.80px;background:#ececec"></div>
<div class="a" style="left:144.00px;top:252.80px;width:1px;height:15.80px;background:#ececec"></div>
<div class="a" style="left:144.00px;top:268.60px;width:1px;height:15.80px;background:#ececec"></div>
<div class="a" style="left:144.00px;top:284.40px;width:1px;height:15.80px;background:#ececec"></div>
<div class="a" style="left:144.00px;top:300.20px;width:1px;height:15.80px;background:#ececec"></div>
<div class="a" style="left:231.50px;top:0.00px;width:1px;height:15.80px;background:#ececec"></div>
<div class="a" style="left:231.50px;top:15.80px;width:1px;height:15.80px;background:#ececec"></div>
<div class="a" style="left:231.50px;top:31.60px;width:1px;height:15.80px;background:#ececec"></div>
<div class="a" style="left:231.50px;top:47.40px;width:1px;height:15.80px;background:#ececec"></div>
<div class="a" style="left:231.50px;top:63.20px;width:1px;height:15.80px;background:#ececec"></div>
<div class="a" style="left:231.50px;top:79.00px;width:1px;height:15.80px;background:#ececec"></div>
<div class="a" style="left:231.50px;top:94.80px;width:1px;height:15.80px;background:#ececec"></div>
<div class="a" style="left:231.50px;top:110.60px;width:1px;height:15.80px;background:#ececec"></div>
<div class="a" style="left:231.50px;top:126.40px;width:1px;height:15.80px;background:#ececec"></div>
<div class="a" style="left:231.50px;top:142.20px;width:1px;height:15.80px;background:#ececec"></div>
<div class="a" style="left:231.50px;top:158.00px;width:1px;height:15.80px;background:#ececec"></div>
<div class="a" style="left:231.50px;top:173.80px;width:1px;height:15.80px;background:#ececec"></div>
<div class="a" style="left:231.50px;top:189.60px;width:1px;height:15.80px;background:#ececec"></div>
<div class="a" style="left:231.50px;top:205.40px;width:1px;height:15.80px;background:#ececec"></div>
<div class="a" style="left:231.50px;top:221.20px;width:1px;height:15.80px;background:#ececec"></div>
<div class="a" style="left:231.50px;top:237.00px;width:1px;height:15.80px;background:#ececec"></div>
<div class="a" style="left:231.50px;top:252.80px;width:1px;height:15.80px;background:#ececec"></div>
<div class="a" style="left:231.50px;top:268.60px;width:1px;height:15.80px;background:#ececec"></div>
<div class="a" style="left:231.50px;top:284.40px;width:1px;height:15.80px;background:#ececec"></div>
<div class="a" style="left:231.50px;top:300.20px;width:1px;height:15.80px;background:#ececec"></div>
<div class="a" style="left:287.25px;top:0.00px;width:1px;height:15.80px;background:#ececec"></div>
<div class="a" style="left:287.25px;top:15.80px;width:1px;height:15.80px;background:#ececec"></div>
<div class="a" style="left:287.25px;top:31.60px;width:1px;height:15.80px;background:#ececec"></div>
<div class="a" style="left:287.25px;top:47.40px;width:1px;height:15.80px;background:#ececec"></div>
<div class="a" style="left:287.25px;top:63.20px;width:1px;height:15.80px;background:#ececec"></div>
<div class="a" style="left:287.25px;top:79.00px;width:1px;height:15.80px;background:#ececec"></div>
<div class="a" style="left:287.25px;top:94.80px;width:1px;height:15.80px;background:#ececec"></div>
<div class="a" style="left:287.25px;top:110.60px;width:1px;height:15.80px;background:#ececec"></div>
<div class="a" style="left:287.25px;top:126.40px;width:1px;height:15.80px;background:#ececec"></div>
<div class="a" style="left:287.25px;top:142.20px;width:1px;height:15.80px;background:#ececec"></div>
<div class="a" style="left:287.25px;top:158.00px;width:1px;height:15.80px;background:#ececec"></div>
<div class="a" style="left:287.25px;top:173.80px;width:1px;height:15.80px;background:#ececec"></div>
<div class="a" style="left:287.25px;top:189.60px;width:1px;height:15.80px;background:#ececec"></div>
<div class="a" style="left:287.25px;top:205.40px;width:1px;height:15.80px;background:#ececec"></div>
<div class="a" style="left:287.25px;top:221.20px;width:1px;height:15.80px;background:#ececec"></div>
<div class="a" style="left:287.25px;top:237.00px;width:1px;height:15.80px;background:#ececec"></div>
<div class="a" style="left:287.25px;top:252.80px;width:1px;height:15.80px;background:#ececec"></div>
<div class="a" style="left:287.25px;top:268.60px;width:1px;height:15.80px;background:#ececec"></div>
<div class="a" style="left:287.25px;top:284.40px;width:1px;height:15.80px;background:#ececec"></div>
<div class="a" style="left:287.25px;top:300.20px;width:1px;height:15.80px;background:#ececec"></div>
<div class="a" style="left:339.25px;top:0.00px;width:1px;height:15.80px;background:#ececec"></div>
<div class="a" style="left:339.25px;top:15.80px;width:1px;height:15.80px;background:#ececec"></div>
<div class="a" style="left:339.25px;top:31.60px;width:1px;height:15.80px;background:#ececec"></div>
<div class="a" style="left:339.25px;top:47.40px;width:1px;height:15.80px;background:#ececec"></div>
<div class="a" style="left:339.25px;top:63.20px;width:1px;height:15.80px;background:#ececec"></div>
<div class="a" style="left:339.25px;top:79.00px;width:1px;height:15.80px;background:#ececec"></div>
<div class="a" style="left:339.25px;top:94.80px;width:1px;height:15.80px;background:#ececec"></div>
<div class="a" style="left:339.25px;top:110.60px;width:1px;height:15.80px;background:#ececec"></div>
<div class="a" style="left:339.25px;top:126.40px;width:1px;height:15.80px;background:#ececec"></div>
<div class="a" style="left:339.25px;top:142.20px;width:1px;height:15.80px;background:#ececec"></div>
<div class="a" style="left:339.25px;top:158.00px;width:1px;height:15.80px;background:#ececec"></div>
<div class="a" style="left:339.25px;top:173.80px;width:1px;height:15.80px;background:#ececec"></div>
<div class="a" style="left:339.25px;top:189.60px;width:1px;height:15.80px;background:#ececec"></div>
<div class="a" style="left:339.25px;top:205.40px;width:1px;height:15.80px;background:#ececec"></div>
<div class="a" style="left:339.25px;top:221.20px;width:1px;height:15.80px;background:#ececec"></div>
<div class="a" style="left:339.25px;top:237.00px;width:1px;height:15.80px;background:#ececec"></div>
<div class="a" style="left:339.25px;top:252.80px;width:1px;height:15.80px;background:#ececec"></div>
<div class="a" style="left:339.25px;top:268.60px;width:1px;height:15.80px;background:#ececec"></div>
<div class="a" style="left:339.25px;top:284.40px;width:1px;height:15.80px;background:#ececec"></div>
<div class="a" style="left:339.25px;top:300.20px;width:1px;height:15.80px;background:#ececec"></div>
<div class="a" style="left:391.50px;top:0.00px;width:1px;height:15.80px;background:#ececec"></div>
<div class="a" style="left:391.50px;top:15.80px;width:1px;height:15.80px;background:#ececec"></div>
<div class="a" style="left:391.50px;top:31.60px;width:1px;height:15.80px;background:#ececec"></div>
<div class="a" style="left:391.50px;top:47.40px;width:1px;height:15.80px;background:#ececec"></div>
<div class="a" style="left:391.50px;top:63.20px;width:1px;height:15.80px;background:#ececec"></div>
<div class="a" style="left:391.50px;top:79.00px;width:1px;height:15.80px;background:#ececec"></div>
<div class="a" style="left:391.50px;top:94.80px;width:1px;height:15.80px;background:#ececec"></div>
<div class="a" style="left:391.50px;top:110.60px;width:1px;height:15.80px;background:#ececec"></div>
<div class="a" style="left:391.50px;top:126.40px;width:1px;height:15.80px;background:#ececec"></div>
<div class="a" style="left:391.50px;top:142.20px;width:1px;height:15.80px;background:#ececec"></div>
<div class="a" style="left:391.50px;top:158.00px;width:1px;height:15.80px;background:#ececec"></div>
<div class="a" style="left:391.50px;top:173.80px;width:1px;height:15.80px;background:#ececec"></div>
<div class="a" style="left:391.50px;top:189.60px;width:1px;height:15.80px;background:#ececec"></div>
<div class="a" style="left:391.50px;top:205.40px;width:1px;height:15.80px;background:#ececec"></div>
<div class="a" style="left:391.50px;top:221.20px;width:1px;height:15.80px;background:#ececec"></div>
<div class="a" style="left:391.50px;top:237.00px;width:1px;height:15.80px;background:#ececec"></div>
<div class="a" style="left:391.50px;top:252.80px;width:1px;height:15.80px;background:#ececec"></div>
<div class="a" style="left:391.50px;top:268.60px;width:1px;height:15.80px;background:#ececec"></div>
<div class="a" style="left:391.50px;top:284.40px;width:1px;height:15.80px;background:#ececec"></div>
<div class="a" style="left:391.50px;top:300.20px;width:1px;height:15.80px;background:#ececec"></div>
<div class="a" style="left:431.50px;top:0.00px;width:1px;height:15.80px;background:#ececec"></div>
<div class="a" style="left:431.50px;top:15.80px;width:1px;height:15.80px;background:#ececec"></div>
<div class="a" style="left:431.50px;top:31.60px;width:1px;height:15.80px;background:#ececec"></div>
<div class="a" style="left:431.50px;top:47.40px;width:1px;height:15.80px;background:#ececec"></div>
<div class="a" style="left:431.50px;top:63.20px;width:1px;height:15.80px;background:#ececec"></div>
<div class="a" style="left:431.50px;top:79.00px;width:1px;height:15.80px;background:#ececec"></div>
<div class="a" style="left:431.50px;top:94.80px;width:1px;height:15.80px;background:#ececec"></div>
<div class="a" style="left:431.50px;top:110.60px;width:1px;height:15.80px;background:#ececec"></div>
<div class="a" style="left:431.50px;top:126.40px;width:1px;height:15.80px;background:#ececec"></div>
<div class="a" style="left:431.50px;top:142.20px;width:1px;height:15.80px;background:#ececec"></div>
<div class="a" style="left:431.50px;top:158.00px;width:1px;height:15.80px;background:#ececec"></div>
<div class="a" style="left:431.50px;top:173.80px;width:1px;height:15.80px;background:#ececec"></div>
<div class="a" style="left:431.50px;top:189.60px;width:1px;height:15.80px;background:#ececec"></div>
<div class="a" style="left:431.50px;top:205.40px;width:1px;height:15.80px;background:#ececec"></div>
<div class="a" style="left:431.50px;top:221.20px;width:1px;height:15.80px;background:#ececec"></div>
<div class="a" style="left:431.50px;top:237.00px;width:1px;height:15.80px;background:#ececec"></div>
<div class="a" style="left:431.50px;top:252.80px;width:1px;height:15.80px;background:#ececec"></div>
<div class="a" style="left:431.50px;top:268.60px;width:1px;height:15.80px;background:#ececec"></div>
<div class="a" style="left:431.50px;top:284.40px;width:1px;height:15.80px;background:#ececec"></div>
<div class="a" style="left:431.50px;top:300.20px;width:1px;height:15.80px;background:#ececec"></div>
<div class="a" style="left:469.75px;top:0.00px;width:1px;height:15.80px;background:#ececec"></div>
<div class="a" style="left:469.75px;top:15.80px;width:1px;height:15.80px;background:#ececec"></div>
<div class="a" style="left:469.75px;top:31.60px;width:1px;height:15.80px;background:#ececec"></div>
<div class="a" style="left:469.75px;top:47.40px;width:1px;height:15.80px;background:#ececec"></div>
<div class="a" style="left:469.75px;top:63.20px;width:1px;height:15.80px;background:#ececec"></div>
<div class="a" style="left:469.75px;top:79.00px;width:1px;height:15.80px;background:#ececec"></div>
<div class="a" style="left:469.75px;top:94.80px;width:1px;height:15.80px;background:#ececec"></div>
<div class="a" style="left:469.75px;top:110.60px;width:1px;height:15.80px;background:#ececec"></div>
<div class="a" style="left:469.75px;top:126.40px;width:1px;height:15.80px;background:#ececec"></div>
<div class="a" style="left:469.75px;top:142.20px;width:1px;height:15.80px;background:#ececec"></div>
<div class="a" style="left:469.75px;top:158.00px;width:1px;height:15.80px;background:#ececec"></div>
<div class="a" style="left:469.75px;top:173.80px;width:1px;height:15.80px;background:#ececec"></div>
<div class="a" style="left:469.75px;top:189.60px;width:1px;height:15.80px;background:#ececec"></div>
<div class="a" style="left:469.75px;top:205.40px;width:1px;height:15.80px;background:#ececec"></div>
<div class="a" style="left:469.75px;top:221.20px;width:1px;height:15.80px;background:#ececec"></div>
<div class="a" style="left:469.75px;top:237.00px;width:1px;height:15.80px;background:#ececec"></div>
<div class="a" style="left:469.75px;top:252.80px;width:1px;height:15.80px;background:#ececec"></div>
<div class="a" style="left:469.75px;top:268.60px;width:1px;height:15.80px;background:#ececec"></div>
<div class="a" style="left:469.75px;top:284.40px;width:1px;height:15.80px;background:#ececec"></div>
<div class="a" style="left:469.75px;top:300.20px;width:1px;height:15.80px;background:#ececec"></div>
<div class="a" style="left:546.50px;top:0.00px;width:1px;height:15.80px;background:#ececec"></div>
<div class="a" style="left:546.50px;top:15.80px;width:1px;height:15.80px;background:#ececec"></div>
<div class="a" style="left:546.50px;top:31.60px;width:1px;height:15.80px;background:#ececec"></div>
<div class="a" style="left:546.50px;top:47.40px;width:1px;height:15.80px;background:#ececec"></div>
<div class="a" style="left:546.50px;top:63.20px;width:1px;height:15.80px;background:#ececec"></div>
<div class="a" style="left:546.50px;top:79.00px;width:1px;height:15.80px;background:#ececec"></div>
<div class="a" style="left:546.50px;top:94.80px;width:1px;height:15.80px;background:#ececec"></div>
<div class="a" style="left:546.50px;top:110.60px;width:1px;height:15.80px;background:#ececec"></div>
<div class="a" style="left:546.50px;top:126.40px;width:1px;height:15.80px;background:#ececec"></div>
<div class="a" style="left:546.50px;top:142.20px;width:1px;height:15.80px;background:#ececec"></div>
<div class="a" style="left:546.50px;top:158.00px;width:1px;height:15.80px;background:#ececec"></div>
<div class="a" style="left:546.50px;top:173.80px;width:1px;height:15.80px;background:#ececec"></div>
<div class="a" style="left:546.50px;top:189.60px;width:1px;height:15.80px;background:#ececec"></div>
<div class="a" style="left:546.50px;top:205.40px;width:1px;height:15.80px;background:#ececec"></div>
<div class="a" style="left:546.50px;top:221.20px;width:1px;height:15.80px;background:#ececec"></div>
<div class="a" style="left:546.50px;top:237.00px;width:1px;height:15.80px;background:#ececec"></div>
<div class="a" style="left:546.50px;top:252.80px;width:1px;height:15.80px;background:#ececec"></div>
<div class="a" style="left:546.50px;top:268.60px;width:1px;height:15.80px;background:#ececec"></div>
<div class="a" style="left:546.50px;top:284.40px;width:1px;height:15.80px;background:#ececec"></div>
<div class="a" style="left:546.50px;top:300.20px;width:1px;height:15.80px;background:#ececec"></div>
<div class="a" style="left:598.50px;top:0.00px;width:1px;height:15.80px;background:#ececec"></div>
<div class="a" style="left:598.50px;top:15.80px;width:1px;height:15.80px;background:#ececec"></div>
<div class="a" style="left:598.50px;top:31.60px;width:1px;height:15.80px;background:#ececec"></div>
<div class="a" style="left:598.50px;top:47.40px;width:1px;height:15.80px;background:#ececec"></div>
<div class="a" style="left:598.50px;top:63.20px;width:1px;height:15.80px;background:#ececec"></div>
<div class="a" style="left:598.50px;top:79.00px;width:1px;height:15.80px;background:#ececec"></div>
<div class="a" style="left:598.50px;top:94.80px;width:1px;height:15.80px;background:#ececec"></div>
<div class="a" style="left:598.50px;top:110.60px;width:1px;height:15.80px;background:#ececec"></div>
<div class="a" style="left:598.50px;top:126.40px;width:1px;height:15.80px;background:#ececec"></div>
<div class="a" style="left:598.50px;top:142.20px;width:1px;height:15.80px;background:#ececec"></div>
<div class="a" style="left:598.50px;top:158.00px;width:1px;height:15.80px;background:#ececec"></div>
<div class="a" style="left:598.50px;top:173.80px;width:1px;height:15.80px;background:#ececec"></div>
<div class="a" style="left:598.50px;top:189.60px;width:1px;height:15.80px;background:#ececec"></div>
<div class="a" style="left:598.50px;top:205.40px;width:1px;height:15.80px;background:#ececec"></div>
<div class="a" style="left:598.50px;top:221.20px;width:1px;height:15.80px;background:#ececec"></div>
<div class="a" style="left:598.50px;top:237.00px;width:1px;height:15.80px;background:#ececec"></div>
<div class="a" style="left:598.50px;top:252.80px;width:1px;height:15.80px;background:#ececec"></div>
<div class="a" style="left:598.50px;top:268.60px;width:1px;height:15.80px;background:#ececec"></div>
<div class="a" style="left:598.50px;top:284.40px;width:1px;height:15.80px;background:#ececec"></div>
<div class="a" style="left:598.50px;top:300.20px;width:1px;height:15.80px;background:#ececec"></div>
<div class="a" style="left:650.75px;top:0.00px;width:1px;height:15.80px;background:#ececec"></div>
<div class="a" style="left:702.75px;top:0.00px;width:1px;height:15.80px;background:#ececec"></div>
<div class="a" style="left:702.75px;top:15.80px;width:1px;height:15.80px;background:#ececec"></div>
<div class="a" style="left:702.75px;top:47.40px;width:1px;height:15.80px;background:#ececec"></div>
<div class="a" style="left:702.75px;top:126.40px;width:1px;height:15.80px;background:#ececec"></div>
<div class="a" style="left:702.75px;top:158.00px;width:1px;height:15.80px;background:#ececec"></div>
<div class="a" style="left:702.75px;top:221.20px;width:1px;height:15.80px;background:#ececec"></div>
<div class="a" style="left:702.75px;top:237.00px;width:1px;height:15.80px;background:#ececec"></div>
<div class="a" style="left:702.75px;top:252.80px;width:1px;height:15.80px;background:#ececec"></div>
<div class="a" style="left:702.75px;top:284.40px;width:1px;height:15.80px;background:#ececec"></div>
<div class="a" style="left:755.25px;top:0.00px;width:1px;height:15.80px;background:#ececec"></div>
<div class="a" style="left:755.25px;top:15.80px;width:1px;height:15.80px;background:#ececec"></div>
<div class="a" style="left:755.25px;top:47.40px;width:1px;height:15.80px;background:#ececec"></div>
<div class="a" style="left:755.25px;top:63.20px;width:1px;height:15.80px;background:#ececec"></div>
<div class="a" style="left:755.25px;top:79.00px;width:1px;height:15.80px;background:#ececec"></div>
<div class="a" style="left:755.25px;top:94.80px;width:1px;height:15.80px;background:#ececec"></div>
<div class="a" style="left:755.25px;top:110.60px;width:1px;height:15.80px;background:#ececec"></div>
<div class="a" style="left:755.25px;top:126.40px;width:1px;height:15.80px;background:#ececec"></div>
<div class="a" style="left:755.25px;top:142.20px;width:1px;height:15.80px;background:#ececec"></div>
<div class="a" style="left:755.25px;top:158.00px;width:1px;height:15.80px;background:#ececec"></div>
<div class="a" style="left:755.25px;top:173.80px;width:1px;height:15.80px;background:#ececec"></div>
<div class="a" style="left:755.25px;top:189.60px;width:1px;height:15.80px;background:#ececec"></div>
<div class="a" style="left:755.25px;top:205.40px;width:1px;height:15.80px;background:#ececec"></div>
<div class="a" style="left:755.25px;top:221.20px;width:1px;height:15.80px;background:#ececec"></div>
<div class="a" style="left:755.25px;top:237.00px;width:1px;height:15.80px;background:#ececec"></div>
<div class="a" style="left:755.25px;top:252.80px;width:1px;height:15.80px;background:#ececec"></div>
<div class="a" style="left:755.25px;top:268.60px;width:1px;height:15.80px;background:#ececec"></div>
<div class="a" style="left:755.25px;top:284.40px;width:1px;height:15.80px;background:#ececec"></div>
<div class="a" style="left:755.25px;top:300.20px;width:1px;height:15.80px;background:#ececec"></div>
<div class="t" style="left:2.00px;top:4px;font-size:11px;line-height:11px;color:#1a1a1a;-webkit-text-stroke:0.25px #1a1a1a;transform:scaleX(1.0341);transform-origin:0 0;width:75.19px;overflow:hidden">first_name</div>
<div class="t" style="left:81.75px;top:4px;font-size:11px;line-height:11px;color:#1a1a1a;-webkit-text-stroke:0.25px #1a1a1a;transform:scaleX(1.0047);transform-origin:0 0;width:62.46px;overflow:hidden">last_name</div>
<div class="t" style="left:146.50px;top:4px;font-size:11px;line-height:11px;color:#1a1a1a;-webkit-text-stroke:0.25px #1a1a1a;transform:scaleX(1.0051);transform-origin:0 0;width:85.07px;overflow:hidden">company_name</div>
<div class="t" style="left:234.00px;top:4px;font-size:11px;line-height:11px;color:#1a1a1a;-webkit-text-stroke:0.25px #1a1a1a;transform:scaleX(0.9722);transform-origin:0 0;width:55.28px;overflow:hidden">address</div>
<div class="t" style="left:289.75px;top:4px;font-size:11px;line-height:11px;color:#1a1a1a;-webkit-text-stroke:0.25px #1a1a1a;transform:scaleX(1.0515);transform-origin:0 0;width:47.55px;overflow:hidden">city</div>
<div class="t" style="left:341.75px;top:4px;font-size:11px;line-height:11px;color:#1a1a1a;-webkit-text-stroke:0.25px #1a1a1a;transform:scaleX(1.0364);transform-origin:0 0;width:48.49px;overflow:hidden">county</div>
<div class="t" style="left:394.00px;top:4px;font-size:11px;line-height:11px;color:#1a1a1a;-webkit-text-stroke:0.25px #1a1a1a;transform:scaleX(1.0290);transform-origin:0 0;width:36.93px;overflow:hidden">state</div>
<div class="t" style="left:434.00px;top:4px;font-size:11px;line-height:11px;color:#1a1a1a;-webkit-text-stroke:0.25px #1a1a1a;transform:scaleX(0.9853);transform-origin:0 0;width:36.79px;overflow:hidden">zip</div>
<div class="t" style="left:472.25px;top:4px;font-size:11px;line-height:11px;color:#1a1a1a;-webkit-text-stroke:0.25px #1a1a1a;transform:scaleX(1.0162);transform-origin:0 0;width:73.56px;overflow:hidden">phone1</div>
<div class="t" style="left:549.00px;top:4px;font-size:11px;line-height:11px;color:#1a1a1a;-webkit-text-stroke:0.25px #1a1a1a;transform:scaleX(1.0244);transform-origin:0 0;width:48.81px;overflow:hidden">phone</div>
<div class="t" style="left:601.00px;top:4px;font-size:11px;line-height:11px;color:#1a1a1a;-webkit-text-stroke:0.25px #1a1a1a;transform:scaleX(1.0238);transform-origin:0 0">email</div>
<div class="t" style="left:2.00px;top:20px;font-size:11px;line-height:11px;color:#1a1a1a;-webkit-text-stroke:0.25px #1a1a1a;transform:scaleX(0.9241);transform-origin:0 0;width:84.13px;overflow:hidden">James</div>
<div class="t" style="left:81.75px;top:20px;font-size:11px;line-height:11px;color:#1a1a1a;-webkit-text-stroke:0.25px #1a1a1a;transform:scaleX(1.0704);transform-origin:0 0;width:58.62px;overflow:hidden">Butt</div>
<div class="t" style="left:146.50px;top:20px;font-size:11px;line-height:11px;color:#1a1a1a;-webkit-text-stroke:0.25px #1a1a1a;transform:scaleX(0.9632);transform-origin:0 0;width:88.77px;overflow:hidden">Benton, John B Jr</div>
<div class="t" style="left:234.00px;top:20px;font-size:11px;line-height:11px;color:#1a1a1a;-webkit-text-stroke:0.25px #1a1a1a;transform:scaleX(0.9655);transform-origin:0 0;width:55.67px;overflow:hidden">6649 N Blue Gum St</div>
<div class="t" style="left:289.75px;top:20px;font-size:11px;line-height:11px;color:#1a1a1a;-webkit-text-stroke:0.25px #1a1a1a;transform:scaleX(0.9888);transform-origin:0 0;width:50.57px;overflow:hidden">New Orleans</div>
<div class="t" style="left:341.75px;top:20px;font-size:11px;line-height:11px;color:#1a1a1a;-webkit-text-stroke:0.25px #1a1a1a;transform:scaleX(0.9798);transform-origin:0 0;width:51.28px;overflow:hidden">Orleans</div>
<div class="t" style="left:394.00px;top:20px;font-size:11px;line-height:11px;color:#1a1a1a;-webkit-text-stroke:0.25px #1a1a1a;transform:scaleX(0.8937);transform-origin:0 0;width:42.52px;overflow:hidden">LA</div>
<div class="t" style="left:437.87px;top:20px;font-size:11px;line-height:11px;color:#1a1a1a;-webkit-text-stroke:0.25px #1a1a1a;transform:scaleX(1.0032);transform-origin:0 0">70116</div>
<div class="t" style="left:472.25px;top:20px;font-size:11px;line-height:11px;color:#1a1a1a;-webkit-text-stroke:0.25px #1a1a1a;transform:scaleX(0.9811);transform-origin:0 0;width:76.19px;overflow:hidden">504-621-8927</div>
<div class="t" style="left:549.00px;top:20px;font-size:11px;line-height:11px;color:#1a1a1a;-webkit-text-stroke:0.25px #1a1a1a;transform:scaleX(0.9811);transform-origin:0 0;width:50.96px;overflow:hidden">504-845-1427</div>
<div class="t" style="left:601.00px;top:20px;font-size:11px;line-height:11px;color:#1a1a1a;-webkit-text-stroke:0.25px #1a1a1a;transform:scaleX(1.0365);transform-origin:0 0">jbutt@gmail.com</div>
<div class="t" style="left:2.00px;top:35px;font-size:11px;line-height:11px;color:#1a1a1a;-webkit-text-stroke:0.25px #1a1a1a;transform:scaleX(0.9701);transform-origin:0 0;width:80.15px;overflow:hidden">Josephine</div>
<div class="t" style="left:81.75px;top:35px;font-size:11px;line-height:11px;color:#1a1a1a;-webkit-text-stroke:0.25px #1a1a1a;transform:scaleX(0.9913);transform-origin:0 0;width:63.30px;overflow:hidden">Darakjy</div>
<div class="t" style="left:146.50px;top:35px;font-size:11px;line-height:11px;color:#1a1a1a;-webkit-text-stroke:0.25px #1a1a1a;transform:scaleX(0.9700);transform-origin:0 0;width:88.14px;overflow:hidden">Chanay, Jeffrey A Esq</div>
<div class="t" style="left:234.00px;top:35px;font-size:11px;line-height:11px;color:#1a1a1a;-webkit-text-stroke:0.25px #1a1a1a;transform:scaleX(0.9555);transform-origin:0 0;width:56.25px;overflow:hidden">4 B Blue Ridge Blvd</div>
<div class="t" style="left:289.75px;top:35px;font-size:11px;line-height:11px;color:#1a1a1a;-webkit-text-stroke:0.25px #1a1a1a;transform:scaleX(1.0307);transform-origin:0 0;width:48.51px;overflow:hidden">Brighton</div>
<div class="t" style="left:341.75px;top:35px;font-size:11px;line-height:11px;color:#1a1a1a;-webkit-text-stroke:0.25px #1a1a1a;transform:scaleX(0.9985);transform-origin:0 0;width:50.32px;overflow:hidden">Livingston</div>
<div class="t" style="left:394.00px;top:35px;font-size:11px;line-height:11px;color:#1a1a1a;-webkit-text-stroke:0.25px #1a1a1a;transform:scaleX(1.0902);transform-origin:0 0;width:34.86px;overflow:hidden">MI</div>
<div class="t" style="left:437.87px;top:35px;font-size:11px;line-height:11px;color:#1a1a1a;-webkit-text-stroke:0.25px #1a1a1a;transform:scaleX(1.0032);transform-origin:0 0">48116</div>
<div class="t" style="left:472.25px;top:35px;font-size:11px;line-height:11px;color:#1a1a1a;-webkit-text-stroke:0.25px #1a1a1a;transform:scaleX(0.9811);transform-origin:0 0;width:76.19px;overflow:hidden">810-292-9388</div>
<div class="t" style="left:549.00px;top:35px;font-size:11px;line-height:11px;color:#1a1a1a;-webkit-text-stroke:0.25px #1a1a1a;transform:scaleX(0.9811);transform-origin:0 0;width:50.96px;overflow:hidden">810-374-9840</div>
<div class="t" style="left:601.00px;top:35px;font-size:11px;line-height:11px;color:#1a1a1a;-webkit-text-stroke:0.25px #1a1a1a;transform:scaleX(1.0134);transform-origin:0 0">josephine_darakjy@darakjy.org</div>
<div class="t" style="left:2.00px;top:51px;font-size:11px;line-height:11px;color:#1a1a1a;-webkit-text-stroke:0.25px #1a1a1a;transform:scaleX(1.0815);transform-origin:0 0;width:71.89px;overflow:hidden">Art</div>
<div class="t" style="left:81.75px;top:51px;font-size:11px;line-height:11px;color:#1a1a1a;-webkit-text-stroke:0.25px #1a1a1a;transform:scaleX(1.0137);transform-origin:0 0;width:61.90px;overflow:hidden">Venere</div>
<div class="t" style="left:146.50px;top:51px;font-size:11px;line-height:11px;color:#1a1a1a;-webkit-text-stroke:0.25px #1a1a1a;transform:scaleX(0.9394);transform-origin:0 0;width:91.01px;overflow:hidden">Chemel, James L Cpa</div>
<div class="t" style="left:234.00px;top:51px;font-size:11px;line-height:11px;color:#1a1a1a;-webkit-text-stroke:0.25px #1a1a1a;transform:scaleX(0.9901);transform-origin:0 0;width:54.29px;overflow:hidden">8 W Cerritos Ave #54</div>
<div class="t" style="left:289.75px;top:51px;font-size:11px;line-height:11px;color:#1a1a1a;-webkit-text-stroke:0.25px #1a1a1a;transform:scaleX(1.0330);transform-origin:0 0;width:48.40px;overflow:hidden">Bridgeport</div>
<div class="t" style="left:341.75px;top:51px;font-size:11px;line-height:11px;color:#1a1a1a;-webkit-text-stroke:0.25px #1a1a1a;transform:scaleX(0.9978);transform-origin:0 0;width:50.36px;overflow:hidden">Gloucester</div>
<div class="t" style="left:394.00px;top:51px;font-size:11px;line-height:11px;color:#1a1a1a;-webkit-text-stroke:0.25px #1a1a1a;transform:scaleX(0.8637);transform-origin:0 0;width:44.00px;overflow:hidden">NJ</div>
<div class="t" style="left:443.85px;top:51px;font-size:11px;line-height:11px;color:#1a1a1a;-webkit-text-stroke:0.25px #1a1a1a;transform:scaleX(0.9762);transform-origin:0 0">8014</div>
<div class="t" style="left:472.25px;top:51px;font-size:11px;line-height:11px;color:#1a1a1a;-webkit-text-stroke:0.25px #1a1a1a;transform:scaleX(0.9811);transform-origin:0 0;width:76.19px;overflow:hidden">856-636-8749</div>
<div class="t" style="left:549.00px;top:51px;font-size:11px;line-height:11px;color:#1a1a1a;-webkit-text-stroke:0.25px #1a1a1a;transform:scaleX(0.9811);transform-origin:0 0;width:50.96px;overflow:hidden">856-264-4130</div>
<div class="t" style="left:601.00px;top:51px;font-size:11px;line-height:11px;color:#1a1a1a;-webkit-text-stroke:0.25px #1a1a1a;transform:scaleX(1.0183);transform-origin:0 0">art@venere.org</div>
<div class="t" style="left:2.00px;top:67px;font-size:11px;line-height:11px;color:#1a1a1a;-webkit-text-stroke:0.25px #1a1a1a;transform:scaleX(0.9641);transform-origin:0 0;width:80.65px;overflow:hidden">Lenna</div>
<div class="t" style="left:81.75px;top:67px;font-size:11px;line-height:11px;color:#1a1a1a;-webkit-text-stroke:0.25px #1a1a1a;transform:scaleX(0.9865);transform-origin:0 0;width:63.61px;overflow:hidden">Paprocki</div>
<div class="t" style="left:146.50px;top:67px;font-size:11px;line-height:11px;color:#1a1a1a;-webkit-text-stroke:0.25px #1a1a1a;transform:scaleX(0.9804);transform-origin:0 0;width:87.21px;overflow:hidden">Feltz Printing Service</div>
<div class="t" style="left:234.00px;top:67px;font-size:11px;line-height:11px;color:#1a1a1a;-webkit-text-stroke:0.25px #1a1a1a;transform:scaleX(0.9909);transform-origin:0 0;width:54.24px;overflow:hidden">639 Main St</div>
<div class="t" style="left:289.75px;top:67px;font-size:11px;line-height:11px;color:#1a1a1a;-webkit-text-stroke:0.25px #1a1a1a;transform:scaleX(0.9907);transform-origin:0 0;width:50.47px;overflow:hidden">Anchorage</div>
<div class="t" style="left:341.75px;top:67px;font-size:11px;line-height:11px;color:#1a1a1a;-webkit-text-stroke:0.25px #1a1a1a;transform:scaleX(0.9907);transform-origin:0 0;width:50.72px;overflow:hidden">Anchorage</div>
<div class="t" style="left:394.00px;top:67px;font-size:11px;line-height:11px;color:#1a1a1a;-webkit-text-stroke:0.25px #1a1a1a;transform:scaleX(0.9009);transform-origin:0 0;width:42.18px;overflow:hidden">AK</div>
<div class="t" style="left:437.87px;top:67px;font-size:11px;line-height:11px;color:#1a1a1a;-webkit-text-stroke:0.25px #1a1a1a;transform:scaleX(0.9766);transform-origin:0 0">99501</div>
<div class="t" style="left:472.25px;top:67px;font-size:11px;line-height:11px;color:#1a1a1a;-webkit-text-stroke:0.25px #1a1a1a;transform:scaleX(0.9811);transform-origin:0 0;width:76.19px;overflow:hidden">907-385-4412</div>
<div class="t" style="left:549.00px;top:67px;font-size:11px;line-height:11px;color:#1a1a1a;-webkit-text-stroke:0.25px #1a1a1a;transform:scaleX(0.9811);transform-origin:0 0;width:50.96px;overflow:hidden">907-921-2010</div>
<div class="t" style="left:601.00px;top:67px;font-size:11px;line-height:11px;color:#1a1a1a;-webkit-text-stroke:0.25px #1a1a1a;transform:scaleX(1.0272);transform-origin:0 0">lpaprocki@hotmail.com</div>
<div class="t" style="left:2.00px;top:83px;font-size:11px;line-height:11px;color:#1a1a1a;-webkit-text-stroke:0.25px #1a1a1a;transform:scaleX(1.0423);transform-origin:0 0;width:74.60px;overflow:hidden">Donette</div>
<div class="t" style="left:81.75px;top:83px;font-size:11px;line-height:11px;color:#1a1a1a;-webkit-text-stroke:0.25px #1a1a1a;transform:scaleX(1.0037);transform-origin:0 0;width:62.52px;overflow:hidden">Foller</div>
<div class="t" style="left:146.50px;top:83px;font-size:11px;line-height:11px;color:#1a1a1a;-webkit-text-stroke:0.25px #1a1a1a;transform:scaleX(1.0023);transform-origin:0 0;width:85.30px;overflow:hidden">Printing Dimensions</div>
<div class="t" style="left:234.00px;top:83px;font-size:11px;line-height:11px;color:#1a1a1a;-webkit-text-stroke:0.25px #1a1a1a;transform:scaleX(0.9714);transform-origin:0 0;width:55.33px;overflow:hidden">34 Center St</div>
<div class="t" style="left:289.75px;top:83px;font-size:11px;line-height:11px;color:#1a1a1a;-webkit-text-stroke:0.25px #1a1a1a;transform:scaleX(1.0403);transform-origin:0 0;width:48.06px;overflow:hidden">Hamilton</div>
<div class="t" style="left:341.75px;top:83px;font-size:11px;line-height:11px;color:#1a1a1a;-webkit-text-stroke:0.25px #1a1a1a;transform:scaleX(1.0394);transform-origin:0 0;width:48.35px;overflow:hidden">Butler</div>
<div class="t" style="left:394.00px;top:83px;font-size:11px;line-height:11px;color:#1a1a1a;-webkit-text-stroke:0.25px #1a1a1a;transform:scaleX(0.9385);transform-origin:0 0;width:40.49px;overflow:hidden">OH</div>
<div class="t" style="left:437.87px;top:83px;font-size:11px;line-height:11px;color:#1a1a1a;-webkit-text-stroke:0.25px #1a1a1a;transform:scaleX(1.0032);transform-origin:0 0">45011</div>
<div class="t" style="left:472.25px;top:83px;font-size:11px;line-height:11px;color:#1a1a1a;-webkit-text-stroke:0.25px #1a1a1a;transform:scaleX(0.9811);transform-origin:0 0;width:76.19px;overflow:hidden">513-570-1893</div>
<div class="t" style="left:549.00px;top:83px;font-size:11px;line-height:11px;color:#1a1a1a;-webkit-text-stroke:0.25px #1a1a1a;transform:scaleX(0.9811);transform-origin:0 0;width:50.96px;overflow:hidden">513-549-4561</div>
<div class="t" style="left:601.00px;top:83px;font-size:11px;line-height:11px;color:#1a1a1a;-webkit-text-stroke:0.25px #1a1a1a;transform:scaleX(1.0406);transform-origin:0 0">donette.foller@cox.net</div>
<div class="t" style="left:2.00px;top:99px;font-size:11px;line-height:11px;color:#1a1a1a;-webkit-text-stroke:0.25px #1a1a1a;transform:scaleX(0.9755);transform-origin:0 0;width:79.70px;overflow:hidden">Simona</div>
<div class="t" style="left:81.75px;top:99px;font-size:11px;line-height:11px;color:#1a1a1a;-webkit-text-stroke:0.25px #1a1a1a;transform:scaleX(1.0005);transform-origin:0 0;width:62.72px;overflow:hidden">Morasca</div>
<div class="t" style="left:146.50px;top:99px;font-size:11px;line-height:11px;color:#1a1a1a;-webkit-text-stroke:0.25px #1a1a1a;transform:scaleX(0.9247);transform-origin:0 0;width:92.47px;overflow:hidden">Chapman, Ross E Esq</div>
<div class="t" style="left:234.00px;top:99px;font-size:11px;line-height:11px;color:#1a1a1a;-webkit-text-stroke:0.25px #1a1a1a;transform:scaleX(0.9995);transform-origin:0 0;width:53.78px;overflow:hidden">3 Mcauley Dr</div>
<div class="t" style="left:289.75px;top:99px;font-size:11px;line-height:11px;color:#1a1a1a;-webkit-text-stroke:0.25px #1a1a1a;transform:scaleX(0.9861);transform-origin:0 0;width:50.70px;overflow:hidden">Ashland</div>
<div class="t" style="left:341.75px;top:99px;font-size:11px;line-height:11px;color:#1a1a1a;-webkit-text-stroke:0.25px #1a1a1a;transform:scaleX(0.9861);transform-origin:0 0;width:50.96px;overflow:hidden">Ashland</div>
<div class="t" style="left:394.00px;top:99px;font-size:11px;line-height:11px;color:#1a1a1a;-webkit-text-stroke:0.25px #1a1a1a;transform:scaleX(0.9385);transform-origin:0 0;width:40.49px;overflow:hidden">OH</div>
<div class="t" style="left:437.87px;top:99px;font-size:11px;line-height:11px;color:#1a1a1a;-webkit-text-stroke:0.25px #1a1a1a;transform:scaleX(0.9766);transform-origin:0 0">44805</div>
<div class="t" style="left:472.25px;top:99px;font-size:11px;line-height:11px;color:#1a1a1a;-webkit-text-stroke:0.25px #1a1a1a;transform:scaleX(0.9811);transform-origin:0 0;width:76.19px;overflow:hidden">419-503-2484</div>
<div class="t" style="left:549.00px;top:99px;font-size:11px;line-height:11px;color:#1a1a1a;-webkit-text-stroke:0.25px #1a1a1a;transform:scaleX(0.9811);transform-origin:0 0;width:50.96px;overflow:hidden">419-800-6759</div>
<div class="t" style="left:601.00px;top:99px;font-size:11px;line-height:11px;color:#1a1a1a;-webkit-text-stroke:0.25px #1a1a1a;transform:scaleX(0.9939);transform-origin:0 0">simona@morasca.com</div>
<div class="t" style="left:2.00px;top:114px;font-size:11px;line-height:11px;color:#1a1a1a;-webkit-text-stroke:0.25px #1a1a1a;transform:scaleX(1.0536);transform-origin:0 0;width:73.80px;overflow:hidden">Mitsue</div>
<div class="t" style="left:81.75px;top:114px;font-size:11px;line-height:11px;color:#1a1a1a;-webkit-text-stroke:0.25px #1a1a1a;transform:scaleX(1.0579);transform-origin:0 0;width:59.31px;overflow:hidden">Tollner</div>
<div class="t" style="left:146.50px;top:114px;font-size:11px;line-height:11px;color:#1a1a1a;-webkit-text-stroke:0.25px #1a1a1a;transform:scaleX(1.0046);transform-origin:0 0;width:85.11px;overflow:hidden">Morlong Associates</div>
<div class="t" style="left:234.00px;top:114px;font-size:11px;line-height:11px;color:#1a1a1a;-webkit-text-stroke:0.25px #1a1a1a;transform:scaleX(0.9165);transform-origin:0 0;width:58.65px;overflow:hidden">7 Eads St</div>
<div class="t" style="left:289.75px;top:114px;font-size:11px;line-height:11px;color:#1a1a1a;-webkit-text-stroke:0.25px #1a1a1a;transform:scaleX(0.9518);transform-origin:0 0;width:52.53px;overflow:hidden">Chicago</div>
<div class="t" style="left:341.75px;top:114px;font-size:11px;line-height:11px;color:#1a1a1a;-webkit-text-stroke:0.25px #1a1a1a;transform:scaleX(0.9581);transform-origin:0 0;width:52.45px;overflow:hidden">Cook</div>
<div class="t" style="left:394.00px;top:114px;font-size:11px;line-height:11px;color:#1a1a1a;-webkit-text-stroke:0.25px #1a1a1a;transform:scaleX(0.8818);transform-origin:0 0;width:43.09px;overflow:hidden">IL</div>
<div class="t" style="left:437.87px;top:114px;font-size:11px;line-height:11px;color:#1a1a1a;-webkit-text-stroke:0.25px #1a1a1a;transform:scaleX(0.9766);transform-origin:0 0">60632</div>
<div class="t" style="left:472.25px;top:114px;font-size:11px;line-height:11px;color:#1a1a1a;-webkit-text-stroke:0.25px #1a1a1a;transform:scaleX(0.9811);transform-origin:0 0;width:76.19px;overflow:hidden">773-573-6914</div>
<div class="t" style="left:549.00px;top:114px;font-size:11px;line-height:11px;color:#1a1a1a;-webkit-text-stroke:0.25px #1a1a1a;transform:scaleX(0.9811);transform-origin:0 0;width:50.96px;overflow:hidden">773-924-8565</div>
<div class="t" style="left:601.00px;top:114px;font-size:11px;line-height:11px;color:#1a1a1a;-webkit-text-stroke:0.25px #1a1a1a;transform:scaleX(1.0270);transform-origin:0 0">mitsue_tollner@yahoo.com</div>
<div class="t" style="left:2.00px;top:130px;font-size:11px;line-height:11px;color:#1a1a1a;-webkit-text-stroke:0.25px #1a1a1a;transform:scaleX(0.9888);transform-origin:0 0;width:78.63px;overflow:hidden">Leota</div>
<div class="t" style="left:81.75px;top:130px;font-size:11px;line-height:11px;color:#1a1a1a;-webkit-text-stroke:0.25px #1a1a1a;transform:scaleX(1.0343);transform-origin:0 0;width:60.67px;overflow:hidden">Dilliard</div>
<div class="t" style="left:146.50px;top:130px;font-size:11px;line-height:11px;color:#1a1a1a;-webkit-text-stroke:0.25px #1a1a1a;transform:scaleX(0.9703);transform-origin:0 0;width:88.11px;overflow:hidden">Commercial Press</div>
<div class="t" style="left:234.00px;top:130px;font-size:11px;line-height:11px;color:#1a1a1a;-webkit-text-stroke:0.25px #1a1a1a;transform:scaleX(0.9559);transform-origin:0 0;width:56.23px;overflow:hidden">7 W Jackson Blvd</div>
<div class="t" style="left:289.75px;top:130px;font-size:11px;line-height:11px;color:#1a1a1a;-webkit-text-stroke:0.25px #1a1a1a;transform:scaleX(0.8995);transform-origin:0 0;width:55.58px;overflow:hidden">San Jose</div>
<div class="t" style="left:341.75px;top:130px;font-size:11px;line-height:11px;color:#1a1a1a;-webkit-text-stroke:0.25px #1a1a1a;transform:scaleX(0.9485);transform-origin:0 0;width:52.98px;overflow:hidden">Santa Clara</div>
<div class="t" style="left:394.00px;top:130px;font-size:11px;line-height:11px;color:#1a1a1a;-webkit-text-stroke:0.25px #1a1a1a;transform:scaleX(0.8767);transform-origin:0 0;width:43.35px;overflow:hidden">CA</div>
<div class="t" style="left:437.87px;top:130px;font-size:11px;line-height:11px;color:#1a1a1a;-webkit-text-stroke:0.25px #1a1a1a;transform:scaleX(1.0314);transform-origin:0 0">95111</div>
<div class="t" style="left:472.25px;top:130px;font-size:11px;line-height:11px;color:#1a1a1a;-webkit-text-stroke:0.25px #1a1a1a;transform:scaleX(0.9811);transform-origin:0 0;width:76.19px;overflow:hidden">408-752-3500</div>
<div class="t" style="left:549.00px;top:130px;font-size:11px;line-height:11px;color:#1a1a1a;-webkit-text-stroke:0.25px #1a1a1a;transform:scaleX(0.9931);transform-origin:0 0;width:50.35px;overflow:hidden">408-813-1105</div>
<div class="t" style="left:601.00px;top:130px;font-size:11px;line-height:11px;color:#1a1a1a;-webkit-text-stroke:0.25px #1a1a1a;transform:scaleX(1.0331);transform-origin:0 0">leota@hotmail.com</div>
<div class="t" style="left:2.00px;top:146px;font-size:11px;line-height:11px;color:#1a1a1a;-webkit-text-stroke:0.25px #1a1a1a;transform:scaleX(0.8939);transform-origin:0 0;width:86.98px;overflow:hidden">Sage</div>
<div class="t" style="left:81.75px;top:146px;font-size:11px;line-height:11px;color:#1a1a1a;-webkit-text-stroke:0.25px #1a1a1a;transform:scaleX(1.0045);transform-origin:0 0;width:62.47px;overflow:hidden">Wieser</div>
<div class="t" style="left:146.50px;top:146px;font-size:11px;line-height:11px;color:#1a1a1a;-webkit-text-stroke:0.25px #1a1a1a;transform:scaleX(1.0274);transform-origin:0 0;width:83.22px;overflow:hidden">Truhlar And Truhlar Attys</div>
<div class="t" style="left:234.00px;top:146px;font-size:11px;line-height:11px;color:#1a1a1a;-webkit-text-stroke:0.25px #1a1a1a;transform:scaleX(0.9867);transform-origin:0 0;width:54.47px;overflow:hidden">5 Boston Ave #88</div>
<div class="t" style="left:289.75px;top:146px;font-size:11px;line-height:11px;color:#1a1a1a;-webkit-text-stroke:0.25px #1a1a1a;transform:scaleX(0.9384);transform-origin:0 0;width:53.29px;overflow:hidden">Sioux Falls</div>
<div class="t" style="left:341.75px;top:146px;font-size:11px;line-height:11px;color:#1a1a1a;-webkit-text-stroke:0.25px #1a1a1a;transform:scaleX(1.0274);transform-origin:0 0;width:48.91px;overflow:hidden">Minnehaha</div>
<div class="t" style="left:394.00px;top:146px;font-size:11px;line-height:11px;color:#1a1a1a;-webkit-text-stroke:0.25px #1a1a1a;transform:scaleX(0.8474);transform-origin:0 0;width:44.84px;overflow:hidden">SD</div>
<div class="t" style="left:437.87px;top:146px;font-size:11px;line-height:11px;color:#1a1a1a;-webkit-text-stroke:0.25px #1a1a1a;transform:scaleX(0.9766);transform-origin:0 0">57105</div>
<div class="t" style="left:472.25px;top:146px;font-size:11px;line-height:11px;color:#1a1a1a;-webkit-text-stroke:0.25px #1a1a1a;transform:scaleX(0.9811);transform-origin:0 0;width:76.19px;overflow:hidden">605-414-2147</div>
<div class="t" style="left:549.00px;top:146px;font-size:11px;line-height:11px;color:#1a1a1a;-webkit-text-stroke:0.25px #1a1a1a;transform:scaleX(0.9811);transform-origin:0 0;width:50.96px;overflow:hidden">605-794-4895</div>
<div class="t" style="left:601.00px;top:146px;font-size:11px;line-height:11px;color:#1a1a1a;-webkit-text-stroke:0.25px #1a1a1a;transform:scaleX(0.9896);transform-origin:0 0">sage_wieser@cox.net</div>
<div class="t" style="left:2.00px;top:162px;font-size:11px;line-height:11px;color:#1a1a1a;-webkit-text-stroke:0.25px #1a1a1a;transform:scaleX(0.9465);transform-origin:0 0;width:82.15px;overflow:hidden">Kris</div>
<div class="t" style="left:81.75px;top:162px;font-size:11px;line-height:11px;color:#1a1a1a;-webkit-text-stroke:0.25px #1a1a1a;transform:scaleX(1.0744);transform-origin:0 0;width:58.40px;overflow:hidden">Marrier</div>
<div class="t" style="left:146.50px;top:162px;font-size:11px;line-height:11px;color:#1a1a1a;-webkit-text-stroke:0.25px #1a1a1a;transform:scaleX(0.9793);transform-origin:0 0;width:87.30px;overflow:hidden">King, Christopher A Esq</div>
<div class="t" style="left:234.00px;top:162px;font-size:11px;line-height:11px;color:#1a1a1a;-webkit-text-stroke:0.25px #1a1a1a;transform:scaleX(0.9677);transform-origin:0 0;width:55.55px;overflow:hidden">228 Runamuck Pl #2808</div>
<div class="t" style="left:289.75px;top:162px;font-size:11px;line-height:11px;color:#1a1a1a;-webkit-text-stroke:0.25px #1a1a1a;transform:scaleX(1.0344);transform-origin:0 0;width:48.34px;overflow:hidden">Baltimore</div>
<div class="t" style="left:341.75px;top:162px;font-size:11px;line-height:11px;color:#1a1a1a;-webkit-text-stroke:0.25px #1a1a1a;transform:scaleX(1.0147);transform-origin:0 0;width:49.52px;overflow:hidden">Baltimore City</div>
<div class="t" style="left:394.00px;top:162px;font-size:11px;line-height:11px;color:#1a1a1a;-webkit-text-stroke:0.25px #1a1a1a;transform:scaleX(1.0354);transform-origin:0 0;width:36.70px;overflow:hidden">MD</div>
<div class="t" style="left:437.87px;top:162px;font-size:11px;line-height:11px;color:#1a1a1a;-webkit-text-stroke:0.25px #1a1a1a;transform:scaleX(0.9766);transform-origin:0 0">21224</div>
<div class="t" style="left:472.25px;top:162px;font-size:11px;line-height:11px;color:#1a1a1a;-webkit-text-stroke:0.25px #1a1a1a;transform:scaleX(0.9811);transform-origin:0 0;width:76.19px;overflow:hidden">410-655-8723</div>
<div class="t" style="left:549.00px;top:162px;font-size:11px;line-height:11px;color:#1a1a1a;-webkit-text-stroke:0.25px #1a1a1a;transform:scaleX(0.9811);transform-origin:0 0;width:50.96px;overflow:hidden">410-804-4694</div>
<div class="t" style="left:601.00px;top:162px;font-size:11px;line-height:11px;color:#1a1a1a;-webkit-text-stroke:0.25px #1a1a1a;transform:scaleX(1.0029);transform-origin:0 0">kris@gmail.com</div>
<div class="t" style="left:2.00px;top:177px;font-size:11px;line-height:11px;color:#1a1a1a;-webkit-text-stroke:0.25px #1a1a1a;transform:scaleX(1.0511);transform-origin:0 0;width:73.97px;overflow:hidden">Minna</div>
<div class="t" style="left:81.75px;top:177px;font-size:11px;line-height:11px;color:#1a1a1a;-webkit-text-stroke:0.25px #1a1a1a;transform:scaleX(1.0113);transform-origin:0 0;width:62.05px;overflow:hidden">Amigon</div>
<div class="t" style="left:146.50px;top:177px;font-size:11px;line-height:11px;color:#1a1a1a;-webkit-text-stroke:0.25px #1a1a1a;transform:scaleX(0.9258);transform-origin:0 0;width:92.35px;overflow:hidden">Dorl, James J Esq</div>
<div class="t" style="left:234.00px;top:177px;font-size:11px;line-height:11px;color:#1a1a1a;-webkit-text-stroke:0.25px #1a1a1a;transform:scaleX(0.9900);transform-origin:0 0;width:54.29px;overflow:hidden">2371 Jerrold Ave</div>
<div class="t" style="left:289.75px;top:177px;font-size:11px;line-height:11px;color:#1a1a1a;-webkit-text-stroke:0.25px #1a1a1a;transform:scaleX(0.9928);transform-origin:0 0;width:50.36px;overflow:hidden">Kulpsville</div>
<div class="t" style="left:341.75px;top:177px;font-size:11px;line-height:11px;color:#1a1a1a;-webkit-text-stroke:0.25px #1a1a1a;transform:scaleX(1.0521);transform-origin:0 0;width:47.76px;overflow:hidden">Montgomery</div>
<div class="t" style="left:394.00px;top:177px;font-size:11px;line-height:11px;color:#1a1a1a;-webkit-text-stroke:0.25px #1a1a1a;transform:scaleX(0.9522);transform-origin:0 0;width:39.91px;overflow:hidden">PA</div>
<div class="t" style="left:437.87px;top:177px;font-size:11px;line-height:11px;color:#1a1a1a;-webkit-text-stroke:0.25px #1a1a1a;transform:scaleX(0.9766);transform-origin:0 0">19443</div>
<div class="t" style="left:472.25px;top:177px;font-size:11px;line-height:11px;color:#1a1a1a;-webkit-text-stroke:0.25px #1a1a1a;transform:scaleX(0.9811);transform-origin:0 0;width:76.19px;overflow:hidden">215-874-1229</div>
<div class="t" style="left:549.00px;top:177px;font-size:11px;line-height:11px;color:#1a1a1a;-webkit-text-stroke:0.25px #1a1a1a;transform:scaleX(0.9811);transform-origin:0 0;width:50.96px;overflow:hidden">215-422-8694</div>
<div class="t" style="left:601.00px;top:177px;font-size:11px;line-height:11px;color:#1a1a1a;-webkit-text-stroke:0.25px #1a1a1a;transform:scaleX(1.0098);transform-origin:0 0">minna_amigon@yahoo.com</div>
<div class="t" style="left:2.00px;top:193px;font-size:11px;line-height:11px;color:#1a1a1a;-webkit-text-stroke:0.25px #1a1a1a;transform:scaleX(1.0014);transform-origin:0 0;width:77.64px;overflow:hidden">Abel</div>
<div class="t" style="left:81.75px;top:193px;font-size:11px;line-height:11px;color:#1a1a1a;-webkit-text-stroke:0.25px #1a1a1a;transform:scaleX(1.0109);transform-origin:0 0;width:62.07px;overflow:hidden">Maclead</div>
<div class="t" style="left:146.50px;top:193px;font-size:11px;line-height:11px;color:#1a1a1a;-webkit-text-stroke:0.25px #1a1a1a;transform:scaleX(0.9768);transform-origin:0 0;width:87.53px;overflow:hidden">Rangoni Of Florence</div>
<div class="t" style="left:234.00px;top:193px;font-size:11px;line-height:11px;color:#1a1a1a;-webkit-text-stroke:0.25px #1a1a1a;transform:scaleX(0.9776);transform-origin:0 0;width:54.98px;overflow:hidden">37275 St  Rt 17m M</div>
<div class="t" style="left:289.75px;top:193px;font-size:11px;line-height:11px;color:#1a1a1a;-webkit-text-stroke:0.25px #1a1a1a;transform:scaleX(1.0205);transform-origin:0 0;width:48.99px;overflow:hidden">Middle Island</div>
<div class="t" style="left:341.75px;top:193px;font-size:11px;line-height:11px;color:#1a1a1a;-webkit-text-stroke:0.25px #1a1a1a;transform:scaleX(1.0114);transform-origin:0 0;width:49.68px;overflow:hidden">Suffolk</div>
<div class="t" style="left:394.00px;top:193px;font-size:11px;line-height:11px;color:#1a1a1a;-webkit-text-stroke:0.25px #1a1a1a;transform:scaleX(0.8932);transform-origin:0 0;width:42.54px;overflow:hidden">NY</div>
<div class="t" style="left:437.87px;top:193px;font-size:11px;line-height:11px;color:#1a1a1a;-webkit-text-stroke:0.25px #1a1a1a;transform:scaleX(1.0032);transform-origin:0 0">11953</div>
<div class="t" style="left:472.25px;top:193px;font-size:11px;line-height:11px;color:#1a1a1a;-webkit-text-stroke:0.25px #1a1a1a;transform:scaleX(0.9811);transform-origin:0 0;width:76.19px;overflow:hidden">631-335-3414</div>
<div class="t" style="left:549.00px;top:193px;font-size:11px;line-height:11px;color:#1a1a1a;-webkit-text-stroke:0.25px #1a1a1a;transform:scaleX(0.9811);transform-origin:0 0;width:50.96px;overflow:hidden">631-677-3675</div>
<div class="t" style="left:601.00px;top:193px;font-size:11px;line-height:11px;color:#1a1a1a;-webkit-text-stroke:0.25px #1a1a1a;transform:scaleX(0.9964);transform-origin:0 0">amaclead@gmail.com</div>
<div class="t" style="left:2.00px;top:209px;font-size:11px;line-height:11px;color:#1a1a1a;-webkit-text-stroke:0.25px #1a1a1a;transform:scaleX(0.9747);transform-origin:0 0;width:79.77px;overflow:hidden">Kiley</div>
<div class="t" style="left:81.75px;top:209px;font-size:11px;line-height:11px;color:#1a1a1a;-webkit-text-stroke:0.25px #1a1a1a;transform:scaleX(0.9776);transform-origin:0 0;width:64.18px;overflow:hidden">Caldarera</div>
<div class="t" style="left:146.50px;top:209px;font-size:11px;line-height:11px;color:#1a1a1a;-webkit-text-stroke:0.25px #1a1a1a;transform:scaleX(0.9738);transform-origin:0 0;width:87.80px;overflow:hidden">Feiner Bros</div>
<div class="t" style="left:234.00px;top:209px;font-size:11px;line-height:11px;color:#1a1a1a;-webkit-text-stroke:0.25px #1a1a1a;transform:scaleX(0.9606);transform-origin:0 0;width:55.96px;overflow:hidden">25 E 75th St #69</div>
<div class="t" style="left:289.75px;top:209px;font-size:11px;line-height:11px;color:#1a1a1a;-webkit-text-stroke:0.25px #1a1a1a;transform:scaleX(0.9560);transform-origin:0 0;width:52.30px;overflow:hidden">Los Angeles</div>
<div class="t" style="left:341.75px;top:209px;font-size:11px;line-height:11px;color:#1a1a1a;-webkit-text-stroke:0.25px #1a1a1a;transform:scaleX(0.9560);transform-origin:0 0;width:52.56px;overflow:hidden">Los Angeles</div>
<div class="t" style="left:394.00px;top:209px;font-size:11px;line-height:11px;color:#1a1a1a;-webkit-text-stroke:0.25px #1a1a1a;transform:scaleX(0.8767);transform-origin:0 0;width:43.35px;overflow:hidden">CA</div>
<div class="t" style="left:437.87px;top:209px;font-size:11px;line-height:11px;color:#1a1a1a;-webkit-text-stroke:0.25px #1a1a1a;transform:scaleX(0.9766);transform-origin:0 0">90034</div>
<div class="t" style="left:472.25px;top:209px;font-size:11px;line-height:11px;color:#1a1a1a;-webkit-text-stroke:0.25px #1a1a1a;transform:scaleX(0.9811);transform-origin:0 0;width:76.19px;overflow:hidden">310-498-5651</div>
<div class="t" style="left:549.00px;top:209px;font-size:11px;line-height:11px;color:#1a1a1a;-webkit-text-stroke:0.25px #1a1a1a;transform:scaleX(0.9811);transform-origin:0 0;width:50.96px;overflow:hidden">310-254-3084</div>
<div class="t" style="left:601.00px;top:209px;font-size:11px;line-height:11px;color:#1a1a1a;-webkit-text-stroke:0.25px #1a1a1a;transform:scaleX(1.0115);transform-origin:0 0">kiley.caldarera@aol.com</div>
<div class="t" style="left:2.00px;top:225px;font-size:11px;line-height:11px;color:#1a1a1a;-webkit-text-stroke:0.25px #1a1a1a;transform:scaleX(0.9755);transform-origin:0 0;width:79.70px;overflow:hidden">Graciela</div>
<div class="t" style="left:81.75px;top:225px;font-size:11px;line-height:11px;color:#1a1a1a;-webkit-text-stroke:0.25px #1a1a1a;transform:scaleX(0.9755);transform-origin:0 0;width:64.32px;overflow:hidden">Ruta</div>
<div class="t" style="left:146.50px;top:225px;font-size:11px;line-height:11px;color:#1a1a1a;-webkit-text-stroke:0.25px #1a1a1a;transform:scaleX(1.0329);transform-origin:0 0;width:82.78px;overflow:hidden">Buckley Miller &amp; Wright</div>
<div class="t" style="left:234.00px;top:225px;font-size:11px;line-height:11px;color:#1a1a1a;-webkit-text-stroke:0.25px #1a1a1a;transform:scaleX(1.0019);transform-origin:0 0;width:53.65px;overflow:hidden">98 Connecticut Ave Nw</div>
<div class="t" style="left:289.75px;top:225px;font-size:11px;line-height:11px;color:#1a1a1a;-webkit-text-stroke:0.25px #1a1a1a;transform:scaleX(0.9531);transform-origin:0 0;width:52.46px;overflow:hidden">Chagrin Falls</div>
<div class="t" style="left:341.75px;top:225px;font-size:11px;line-height:11px;color:#1a1a1a;-webkit-text-stroke:0.25px #1a1a1a;transform:scaleX(0.9486);transform-origin:0 0;width:52.97px;overflow:hidden">Geauga</div>
<div class="t" style="left:394.00px;top:225px;font-size:11px;line-height:11px;color:#1a1a1a;-webkit-text-stroke:0.25px #1a1a1a;transform:scaleX(0.9385);transform-origin:0 0;width:40.49px;overflow:hidden">OH</div>
<div class="t" style="left:437.87px;top:225px;font-size:11px;line-height:11px;color:#1a1a1a;-webkit-text-stroke:0.25px #1a1a1a;transform:scaleX(0.9766);transform-origin:0 0">44023</div>
<div class="t" style="left:472.25px;top:225px;font-size:11px;line-height:11px;color:#1a1a1a;-webkit-text-stroke:0.25px #1a1a1a;transform:scaleX(0.9811);transform-origin:0 0;width:76.19px;overflow:hidden">440-780-8425</div>
<div class="t" style="left:549.00px;top:225px;font-size:11px;line-height:11px;color:#1a1a1a;-webkit-text-stroke:0.25px #1a1a1a;transform:scaleX(0.9811);transform-origin:0 0;width:50.96px;overflow:hidden">440-579-7763</div>
<div class="t" style="left:601.00px;top:225px;font-size:11px;line-height:11px;color:#1a1a1a;-webkit-text-stroke:0.25px #1a1a1a;transform:scaleX(1.0157);transform-origin:0 0">gruta@cox.net</div>
<div class="t" style="left:2.00px;top:241px;font-size:11px;line-height:11px;color:#1a1a1a;-webkit-text-stroke:0.25px #1a1a1a;transform:scaleX(0.9739);transform-origin:0 0;width:79.83px;overflow:hidden">Cammy</div>
<div class="t" style="left:81.75px;top:241px;font-size:11px;line-height:11px;color:#1a1a1a;-webkit-text-stroke:0.25px #1a1a1a;transform:scaleX(0.9853);transform-origin:0 0;width:63.69px;overflow:hidden">Albares</div>
<div class="t" style="left:146.50px;top:241px;font-size:11px;line-height:11px;color:#1a1a1a;-webkit-text-stroke:0.25px #1a1a1a;transform:scaleX(0.9613);transform-origin:0 0;width:88.94px;overflow:hidden">Rousseaux, Michael Esq</div>
<div class="t" style="left:234.00px;top:241px;font-size:11px;line-height:11px;color:#1a1a1a;-webkit-text-stroke:0.25px #1a1a1a;transform:scaleX(0.9799);transform-origin:0 0;width:54.85px;overflow:hidden">56 E Morehead St</div>
<div class="t" style="left:289.75px;top:241px;font-size:11px;line-height:11px;color:#1a1a1a;-webkit-text-stroke:0.25px #1a1a1a;transform:scaleX(0.9840);transform-origin:0 0;width:50.81px;overflow:hidden">Laredo</div>
<div class="t" style="left:341.75px;top:241px;font-size:11px;line-height:11px;color:#1a1a1a;-webkit-text-stroke:0.25px #1a1a1a;transform:scaleX(1.0291);transform-origin:0 0;width:48.83px;overflow:hidden">Webb</div>
<div class="t" style="left:394.00px;top:241px;font-size:11px;line-height:11px;color:#1a1a1a;-webkit-text-stroke:0.25px #1a1a1a;transform:scaleX(0.8623);transform-origin:0 0;width:44.07px;overflow:hidden">TX</div>
<div class="t" style="left:437.87px;top:241px;font-size:11px;line-height:11px;color:#1a1a1a;-webkit-text-stroke:0.25px #1a1a1a;transform:scaleX(0.9766);transform-origin:0 0">78045</div>
<div class="t" style="left:472.25px;top:241px;font-size:11px;line-height:11px;color:#1a1a1a;-webkit-text-stroke:0.25px #1a1a1a;transform:scaleX(0.9811);transform-origin:0 0;width:76.19px;overflow:hidden">956-537-6195</div>
<div class="t" style="left:549.00px;top:241px;font-size:11px;line-height:11px;color:#1a1a1a;-webkit-text-stroke:0.25px #1a1a1a;transform:scaleX(0.9811);transform-origin:0 0;width:50.96px;overflow:hidden">956-841-7216</div>
<div class="t" style="left:601.00px;top:241px;font-size:11px;line-height:11px;color:#1a1a1a;-webkit-text-stroke:0.25px #1a1a1a;transform:scaleX(0.9927);transform-origin:0 0">calbares@gmail.com</div>
<div class="t" style="left:2.00px;top:256px;font-size:11px;line-height:11px;color:#1a1a1a;-webkit-text-stroke:0.25px #1a1a1a;transform:scaleX(1.0980);transform-origin:0 0;width:70.81px;overflow:hidden">Mattie</div>
<div class="t" style="left:81.75px;top:256px;font-size:11px;line-height:11px;color:#1a1a1a;-webkit-text-stroke:0.25px #1a1a1a;transform:scaleX(1.0285);transform-origin:0 0;width:61.01px;overflow:hidden">Poquette</div>
<div class="t" style="left:146.50px;top:256px;font-size:11px;line-height:11px;color:#1a1a1a;-webkit-text-stroke:0.25px #1a1a1a;transform:scaleX(1.0042);transform-origin:0 0;width:85.14px;overflow:hidden">Century Communications</div>
<div class="t" style="left:234.00px;top:256px;font-size:11px;line-height:11px;color:#1a1a1a;-webkit-text-stroke:0.25px #1a1a1a;transform:scaleX(0.9510);transform-origin:0 0;width:56.52px;overflow:hidden">73 State Road 434 E</div>
<div class="t" style="left:289.75px;top:256px;font-size:11px;line-height:11px;color:#1a1a1a;-webkit-text-stroke:0.25px #1a1a1a;transform:scaleX(0.9863);transform-origin:0 0;width:50.70px;overflow:hidden">Phoenix</div>
<div class="t" style="left:341.75px;top:256px;font-size:11px;line-height:11px;color:#1a1a1a;-webkit-text-stroke:0.25px #1a1a1a;transform:scaleX(1.0296);transform-origin:0 0;width:48.80px;overflow:hidden">Maricopa</div>
<div class="t" style="left:394.00px;top:256px;font-size:11px;line-height:11px;color:#1a1a1a;-webkit-text-stroke:0.25px #1a1a1a;transform:scaleX(0.8970);transform-origin:0 0;width:42.36px;overflow:hidden">AZ</div>
<div class="t" style="left:437.87px;top:256px;font-size:11px;line-height:11px;color:#1a1a1a;-webkit-text-stroke:0.25px #1a1a1a;transform:scaleX(0.9766);transform-origin:0 0">85013</div>
<div class="t" style="left:472.25px;top:256px;font-size:11px;line-height:11px;color:#1a1a1a;-webkit-text-stroke:0.25px #1a1a1a;transform:scaleX(0.9811);transform-origin:0 0;width:76.19px;overflow:hidden">602-277-4385</div>
<div class="t" style="left:549.00px;top:256px;font-size:11px;line-height:11px;color:#1a1a1a;-webkit-text-stroke:0.25px #1a1a1a;transform:scaleX(0.9811);transform-origin:0 0;width:50.96px;overflow:hidden">602-953-6360</div>
<div class="t" style="left:601.00px;top:256px;font-size:11px;line-height:11px;color:#1a1a1a;-webkit-text-stroke:0.25px #1a1a1a;transform:scaleX(1.0296);transform-origin:0 0">mattie@aol.com</div>
<div class="t" style="left:2.00px;top:272px;font-size:11px;line-height:11px;color:#1a1a1a;-webkit-text-stroke:0.25px #1a1a1a;transform:scaleX(1.0065);transform-origin:0 0;width:77.25px;overflow:hidden">Meaghan</div>
<div class="t" style="left:81.75px;top:272px;font-size:11px;line-height:11px;color:#1a1a1a;-webkit-text-stroke:0.25px #1a1a1a;transform:scaleX(1.0126);transform-origin:0 0;width:61.97px;overflow:hidden">Garufi</div>
<div class="t" style="left:146.50px;top:272px;font-size:11px;line-height:11px;color:#1a1a1a;-webkit-text-stroke:0.25px #1a1a1a;transform:scaleX(1.0045);transform-origin:0 0;width:85.12px;overflow:hidden">Bolton, Wilbur Esq</div>
<div class="t" style="left:234.00px;top:272px;font-size:11px;line-height:11px;color:#1a1a1a;-webkit-text-stroke:0.25px #1a1a1a;transform:scaleX(0.9629);transform-origin:0 0;width:55.82px;overflow:hidden">69734 E Carrillo St</div>
<div class="t" style="left:289.75px;top:272px;font-size:11px;line-height:11px;color:#1a1a1a;-webkit-text-stroke:0.25px #1a1a1a;transform:scaleX(1.0507);transform-origin:0 0;width:47.59px;overflow:hidden">Mc Minnville</div>
<div class="t" style="left:341.75px;top:272px;font-size:11px;line-height:11px;color:#1a1a1a;-webkit-text-stroke:0.25px #1a1a1a;transform:scaleX(1.0438);transform-origin:0 0;width:48.14px;overflow:hidden">Warren</div>
<div class="t" style="left:394.00px;top:272px;font-size:11px;line-height:11px;color:#1a1a1a;-webkit-text-stroke:0.25px #1a1a1a;transform:scaleX(0.9303);transform-origin:0 0;width:40.85px;overflow:hidden">TN</div>
<div class="t" style="left:437.87px;top:272px;font-size:11px;line-height:11px;color:#1a1a1a;-webkit-text-stroke:0.25px #1a1a1a;transform:scaleX(1.0032);transform-origin:0 0">37110</div>
<div class="t" style="left:472.25px;top:272px;font-size:11px;line-height:11px;color:#1a1a1a;-webkit-text-stroke:0.25px #1a1a1a;transform:scaleX(0.9811);transform-origin:0 0;width:76.19px;overflow:hidden">931-313-9635</div>
<div class="t" style="left:549.00px;top:272px;font-size:11px;line-height:11px;color:#1a1a1a;-webkit-text-stroke:0.25px #1a1a1a;transform:scaleX(0.9811);transform-origin:0 0;width:50.96px;overflow:hidden">931-235-7959</div>
<div class="t" style="left:601.00px;top:272px;font-size:11px;line-height:11px;color:#1a1a1a;-webkit-text-stroke:0.25px #1a1a1a;transform:scaleX(1.0144);transform-origin:0 0">meaghan@hotmail.com</div>
<div class="t" style="left:2.00px;top:288px;font-size:11px;line-height:11px;color:#1a1a1a;-webkit-text-stroke:0.25px #1a1a1a;transform:scaleX(0.9529);transform-origin:0 0;width:81.60px;overflow:hidden">Gladys</div>
<div class="t" style="left:81.75px;top:288px;font-size:11px;line-height:11px;color:#1a1a1a;-webkit-text-stroke:0.25px #1a1a1a;transform:scaleX(0.9678);transform-origin:0 0;width:64.84px;overflow:hidden">Rim</div>
<div class="t" style="left:146.50px;top:288px;font-size:11px;line-height:11px;color:#1a1a1a;-webkit-text-stroke:0.25px #1a1a1a;transform:scaleX(0.9656);transform-origin:0 0;width:88.55px;overflow:hidden">T M Byxbee Company Pc</div>
<div class="t" style="left:234.00px;top:288px;font-size:11px;line-height:11px;color:#1a1a1a;-webkit-text-stroke:0.25px #1a1a1a;transform:scaleX(0.9913);transform-origin:0 0;width:54.22px;overflow:hidden">322 New Horizon Blvd</div>
<div class="t" style="left:289.75px;top:288px;font-size:11px;line-height:11px;color:#1a1a1a;-webkit-text-stroke:0.25px #1a1a1a;transform:scaleX(1.0394);transform-origin:0 0;width:48.10px;overflow:hidden">Milwaukee</div>
<div class="t" style="left:341.75px;top:288px;font-size:11px;line-height:11px;color:#1a1a1a;-webkit-text-stroke:0.25px #1a1a1a;transform:scaleX(1.0394);transform-origin:0 0;width:48.35px;overflow:hidden">Milwaukee</div>
<div class="t" style="left:394.00px;top:288px;font-size:11px;line-height:11px;color:#1a1a1a;-webkit-text-stroke:0.25px #1a1a1a;transform:scaleX(1.0225);transform-origin:0 0;width:37.16px;overflow:hidden">WI</div>
<div class="t" style="left:437.87px;top:288px;font-size:11px;line-height:11px;color:#1a1a1a;-webkit-text-stroke:0.25px #1a1a1a;transform:scaleX(0.9766);transform-origin:0 0">53207</div>
<div class="t" style="left:472.25px;top:288px;font-size:11px;line-height:11px;color:#1a1a1a;-webkit-text-stroke:0.25px #1a1a1a;transform:scaleX(0.9811);transform-origin:0 0;width:76.19px;overflow:hidden">414-661-9598</div>
<div class="t" style="left:549.00px;top:288px;font-size:11px;line-height:11px;color:#1a1a1a;-webkit-text-stroke:0.25px #1a1a1a;transform:scaleX(0.9811);transform-origin:0 0;width:50.96px;overflow:hidden">414-377-2880</div>
<div class="t" style="left:601.00px;top:288px;font-size:11px;line-height:11px;color:#1a1a1a;-webkit-text-stroke:0.25px #1a1a1a;transform:scaleX(1.0151);transform-origin:0 0">gladys.rim@rim.org</div>
<div class="t" style="left:2.00px;top:304px;font-size:11px;line-height:11px;color:#1a1a1a;-webkit-text-stroke:0.25px #1a1a1a;transform:scaleX(0.9831);transform-origin:0 0;width:79.09px;overflow:hidden">Yuki</div>
<div class="t" style="left:81.75px;top:304px;font-size:11px;line-height:11px;color:#1a1a1a;-webkit-text-stroke:0.25px #1a1a1a;transform:scaleX(1.0308);transform-origin:0 0;width:60.88px;overflow:hidden">Whobrey</div>
<div class="t" style="left:146.50px;top:304px;font-size:11px;line-height:11px;color:#1a1a1a;-webkit-text-stroke:0.25px #1a1a1a;transform:scaleX(0.9855);transform-origin:0 0;width:86.76px;overflow:hidden">Farmers Insurance Group</div>
<div class="t" style="left:234.00px;top:304px;font-size:11px;line-height:11px;color:#1a1a1a;-webkit-text-stroke:0.25px #1a1a1a;transform:scaleX(0.9787);transform-origin:0 0;width:54.92px;overflow:hidden">1 State Route 27</div>
<div class="t" style="left:289.75px;top:304px;font-size:11px;line-height:11px;color:#1a1a1a;-webkit-text-stroke:0.25px #1a1a1a;transform:scaleX(1.0366);transform-origin:0 0;width:48.23px;overflow:hidden">Taylor</div>
<div class="t" style="left:341.75px;top:304px;font-size:11px;line-height:11px;color:#1a1a1a;-webkit-text-stroke:0.25px #1a1a1a;transform:scaleX(1.0131);transform-origin:0 0;width:49.60px;overflow:hidden">Wayne</div>
<div class="t" style="left:394.00px;top:304px;font-size:11px;line-height:11px;color:#1a1a1a;-webkit-text-stroke:0.25px #1a1a1a;transform:scaleX(1.0902);transform-origin:0 0;width:34.86px;overflow:hidden">MI</div>
<div class="t" style="left:437.87px;top:304px;font-size:11px;line-height:11px;color:#1a1a1a;-webkit-text-stroke:0.25px #1a1a1a;transform:scaleX(0.9766);transform-origin:0 0">48180</div>
<div class="t" style="left:472.25px;top:304px;font-size:11px;line-height:11px;color:#1a1a1a;-webkit-text-stroke:0.25px #1a1a1a;transform:scaleX(0.9811);transform-origin:0 0;width:76.19px;overflow:hidden">313-288-7937</div>
<div class="t" style="left:549.00px;top:304px;font-size:11px;line-height:11px;color:#1a1a1a;-webkit-text-stroke:0.25px #1a1a1a;transform:scaleX(0.9811);transform-origin:0 0;width:50.96px;overflow:hidden">313-341-4470</div>
<div class="t" style="left:601.00px;top:304px;font-size:11px;line-height:11px;color:#1a1a1a;-webkit-text-stroke:0.25px #1a1a1a;transform:scaleX(1.0181);transform-origin:0 0">yuki_whobrey@aol.com</div>
</div>
<div class="a" style="left:0;top:190.8px;width:21.75px;height:1px;background:#5a5a5a"></div>
<div class="a" style="left:0;top:206px;width:21.75px;height:1px;background:#5a5a5a"></div>
<div class="a" style="left:0;top:222px;width:21.75px;height:1px;background:#5a5a5a"></div>
<div class="a" style="left:0;top:238px;width:21.75px;height:1px;background:#5a5a5a"></div>
<div class="a" style="left:0;top:254px;width:21.75px;height:1px;background:#5a5a5a"></div>
<div class="a" style="left:0;top:270px;width:21.75px;height:1px;background:#5a5a5a"></div>
<div class="a" style="left:0;top:285px;width:21.75px;height:1px;background:#5a5a5a"></div>
<div class="a" style="left:0;top:301px;width:21.75px;height:1px;background:#5a5a5a"></div>
<div class="a" style="left:0;top:317px;width:21.75px;height:1px;background:#5a5a5a"></div>
<div class="a" style="left:0;top:333px;width:21.75px;height:1px;background:#5a5a5a"></div>
<div class="a" style="left:0;top:349px;width:21.75px;height:1px;background:#5a5a5a"></div>
<div class="a" style="left:0;top:364px;width:21.75px;height:1px;background:#5a5a5a"></div>
<div class="a" style="left:0;top:380px;width:21.75px;height:1px;background:#5a5a5a"></div>
<div class="a" style="left:0;top:396px;width:21.75px;height:1px;background:#5a5a5a"></div>
<div class="a" style="left:0;top:396.40px;width:21.75px;height:15.80px;background:#5d5d5d"></div>
<div class="a" style="left:20.3px;top:396.40px;width:1.7px;height:15.80px;background:#4a8a66"></div>
<div class="a" style="left:0;top:412px;width:21.75px;height:1px;background:#5a5a5a"></div>
<div class="a" style="left:0;top:428px;width:21.75px;height:1px;background:#5a5a5a"></div>
<div class="a" style="left:0;top:443px;width:21.75px;height:1px;background:#5a5a5a"></div>
<div class="a" style="left:0;top:459px;width:21.75px;height:1px;background:#5a5a5a"></div>
<div class="a" style="left:0;top:475px;width:21.75px;height:1px;background:#5a5a5a"></div>
<div class="a" style="left:0;top:491px;width:21.75px;height:1px;background:#5a5a5a"></div>
<div class="a" style="left:0;top:507px;width:21.75px;height:1px;background:#5a5a5a"></div>
<div class="a" style="left:84px;top:503px;width:92px;height:6px;background:#fff"></div>
<div class="a" style="left:0;top:504.5px;width:90.2px;height:22.5px;background:#333333;border-top-right-radius:3.5px"></div>
<div class="a" style="left:169px;top:504.5px;width:640px;height:22.5px;background:#333333;border-top-left-radius:3.5px"></div>
<div class="a" style="left:90.2px;top:504.5px;width:78.8px;height:22.5px;background:#333333"></div>
<div class="a" style="left:90.2px;top:503.5px;width:78.8px;height:23.1px;background:#fff;border-radius:0 0 3.5px 3.5px"></div>
<div class="a" style="left:0;top:527px;width:800px;height:21px;background:#393939"></div>
<div class="a" style="left:97px;top:522.9px;width:65px;height:2px;background:#3b8a64"></div>
<div class="a" style="left:172px;top:510px;width:1px;height:14px;background:#5a5a5a"></div>
<svg class="a" style="left:205.5px;top:510.5px;" width="12" height="12" viewBox="0 0 12 12"><path d="M6 0.5v11M0.5 6h11" stroke="#d0d0d0" stroke-width="1.2"/></svg>
<svg class="a" style="left:18px;top:511px;" width="8" height="11" viewBox="0 0 8 11"><path d="M6 1L1.6 5.3 6 9.8" fill="none" stroke="#9a9a9a" stroke-width="1.1"/></svg>
<svg class="a" style="left:44px;top:511px;" width="8" height="11" viewBox="0 0 8 11"><path d="M1.5 1l4.4 4.3-4.4 4.5" fill="none" stroke="#9a9a9a" stroke-width="1.1"/></svg>
<svg class="a" style="left:627px;top:512px;" width="4" height="12" viewBox="0 0 4 12"><circle cx="2" cy="1.8" r="0.9" fill="#c8c8c8"/><circle cx="2" cy="5.2" r="0.9" fill="#c8c8c8"/><circle cx="2" cy="8.6" r="0.9" fill="#c8c8c8"/></svg>
<svg class="a" style="left:645px;top:513px;" width="8" height="8" viewBox="0 0 8 8"><path d="M6.8 0.8v6.6L1 4.1z" fill="#c8c8c8"/></svg>
<div class="a" style="left:656px;top:513.5px;width:160px;height:6.8px;background:#cfcfcf;border-radius:3.4px"></div>
<svg class="a" style="left:43px;top:533px;" width="15" height="13" viewBox="0 0 15 13"><path d="M1.8 11.4V2.2h10.4v4.2" fill="none" stroke="#d6d6d6" stroke-width="1.2"/><path d="M1.8 2.2h10.4v1.6H1.8z" fill="#d6d6d6"/><path d="M1.8 11.4h3.5" stroke="#d6d6d6" stroke-width="1.2"/><path d="M3.4 6.2h2.4M3.4 8.4h1.8" stroke="#bdbdbd" stroke-width="0.9"/><circle cx="9.3" cy="8.7" r="3.5" fill="#393939" stroke="#e0e0e0" stroke-width="1.1"/><circle cx="9.3" cy="8.7" r="1.5" fill="#f0f0f0"/></svg>
<svg class="a" style="left:69px;top:533px;" width="14" height="13" viewBox="0 0 14 13"><circle cx="5.8" cy="2.6" r="1.3" fill="none" stroke="#dcdcdc" stroke-width="1.1"/><path d="M1.6 3.4C2.6 5 4 5.2 5.8 5.2S9 5 10 3.4" fill="none" stroke="#dcdcdc" stroke-width="1.1" stroke-linecap="round"/><path d="M4.4 5.4C4.6 7.6 3.2 9.6 2.8 11.4M7.2 5.4c0 1.6 0.4 2.6 0.8 3.2" fill="none" stroke="#dcdcdc" stroke-width="1.1" stroke-linecap="round"/><path d="M6.6 9.6l2 2 3.8-3.8" fill="none" stroke="#dcdcdc" stroke-width="1.2" stroke-linecap="round" stroke-linejoin="round"/></svg>
<div class="t" style="left:39.00px;top:15px;font-size:10.5px;line-height:10.5px;color:#f0f0f0;-webkit-text-stroke:0.2px #f0f0f0;transform:scaleX(0.9002);transform-origin:0 0">AutoSave</div>
<div class="t" style="left:102.90px;top:15px;font-size:9.5px;line-height:9.5px;color:#f0f0f0;-webkit-text-stroke:0.2px #f0f0f0;transform:scaleX(0.9680);transform-origin:0 0">Off</div>
<div class="t" style="left:160.00px;top:15px;font-size:10.5px;line-height:10.5px;color:#f0f0f0;-webkit-text-stroke:0.2px #f0f0f0;transform:scaleX(0.8706);transform-origin:0 0">Business Contacts.xlsx</div>
<div class="t" style="left:427.00px;top:15px;font-size:10.5px;line-height:10.5px;color:#c4c4c4;-webkit-text-stroke:0.2px #c4c4c4;transform:scaleX(0.9615);transform-origin:0 0">Search</div>
<div class="t" style="left:17.20px;top:48px;font-size:10.2px;line-height:10.2px;color:#f2f2f2;-webkit-text-stroke:0.2px #f2f2f2;transform:scaleX(1.0352);transform-origin:0 0">File</div>
<div class="t" style="left:55.00px;top:48px;font-size:10.2px;line-height:10.2px;color:#f2f2f2;font-weight:bold;-webkit-text-stroke:0.2px #f2f2f2;transform:scaleX(1.0508);transform-origin:0 0">Home</div>
<div class="t" style="left:100.75px;top:48px;font-size:10.2px;line-height:10.2px;color:#f2f2f2;-webkit-text-stroke:0.2px #f2f2f2;transform:scaleX(1.0202);transform-origin:0 0">Insert</div>
<div class="t" style="left:144.00px;top:48px;font-size:10.2px;line-height:10.2px;color:#f2f2f2;-webkit-text-stroke:0.2px #f2f2f2;transform:scaleX(1.0049);transform-origin:0 0">Page Layout</div>
<div class="t" style="left:218.85px;top:48px;font-size:10.2px;line-height:10.2px;color:#f2f2f2;-webkit-text-stroke:0.2px #f2f2f2;transform:scaleX(1.0243);transform-origin:0 0">Formulas</div>
<div class="t" style="left:278.65px;top:48px;font-size:10.2px;line-height:10.2px;color:#f2f2f2;-webkit-text-stroke:0.2px #f2f2f2;transform:scaleX(0.9985);transform-origin:0 0">Data</div>
<div class="t" style="left:316.00px;top:48px;font-size:10.2px;line-height:10.2px;color:#f2f2f2;-webkit-text-stroke:0.2px #f2f2f2;transform:scaleX(0.9729);transform-origin:0 0">Review</div>
<div class="t" style="left:364.10px;top:48px;font-size:10.2px;line-height:10.2px;color:#f2f2f2;-webkit-text-stroke:0.2px #f2f2f2;transform:scaleX(1.0408);transform-origin:0 0">View</div>
<div class="t" style="left:403.10px;top:48px;font-size:10.2px;line-height:10.2px;color:#f2f2f2;-webkit-text-stroke:0.2px #f2f2f2;transform:scaleX(1.0777);transform-origin:0 0">Automate</div>
<div class="t" style="left:467.00px;top:48px;font-size:10.2px;line-height:10.2px;color:#f2f2f2;-webkit-text-stroke:0.2px #f2f2f2;transform:scaleX(1.0423);transform-origin:0 0">Developer</div>
<div class="t" style="left:532.00px;top:48px;font-size:10.2px;line-height:10.2px;color:#f2f2f2;-webkit-text-stroke:0.2px #f2f2f2;transform:scaleX(1.0380);transform-origin:0 0">Help</div>
<div class="t" style="left:570.00px;top:48px;font-size:10.2px;line-height:10.2px;color:#f2f2f2;-webkit-text-stroke:0.2px #f2f2f2;transform:scaleX(0.9381);transform-origin:0 0">ACROBAT</div>
<div class="t" style="left:22.00px;top:134px;font-size:9.2px;line-height:9.2px;color:#e6e6e6;-webkit-text-stroke:0.2px #e6e6e6;transform:scaleX(0.9331);transform-origin:0 0">Undo</div>
<div class="t" style="left:70.75px;top:134px;font-size:9.2px;line-height:9.2px;color:#e6e6e6;-webkit-text-stroke:0.2px #e6e6e6;transform:scaleX(0.9472);transform-origin:0 0">Clipboard</div>
<div class="t" style="left:216.00px;top:134px;font-size:9.2px;line-height:9.2px;color:#e6e6e6;-webkit-text-stroke:0.2px #e6e6e6;transform:scaleX(0.9788);transform-origin:0 0">Font</div>
<div class="t" style="left:381.00px;top:134px;font-size:9.2px;line-height:9.2px;color:#e6e6e6;-webkit-text-stroke:0.2px #e6e6e6;transform:scaleX(0.9667);transform-origin:0 0">Alignment</div>
<div class="t" style="left:508.50px;top:134px;font-size:9.2px;line-height:9.2px;color:#e6e6e6;-webkit-text-stroke:0.2px #e6e6e6;transform:scaleX(0.9178);transform-origin:0 0">Number</div>
<div class="t" style="left:636.50px;top:134px;font-size:9.2px;line-height:9.2px;color:#e6e6e6;-webkit-text-stroke:0.2px #e6e6e6;transform:scaleX(0.8989);transform-origin:0 0">Styles</div>
<div class="t" style="left:754.00px;top:134px;font-size:9.2px;line-height:9.2px;color:#e6e6e6;-webkit-text-stroke:0.2px #e6e6e6;transform:scaleX(0.8814);transform-origin:0 0">Cells</div>
<div class="t" style="left:67.70px;top:100px;font-size:9.6px;line-height:9.6px;color:#858585;-webkit-text-stroke:0.2px #858585;transform:scaleX(0.9044);transform-origin:0 0">Paste</div>
<div class="t" style="left:144.90px;top:79px;font-size:10.6px;line-height:10.6px;color:#f0f0f0;-webkit-text-stroke:0.2px #f0f0f0;transform:scaleX(0.8857);transform-origin:0 0">Calibri</div>
<div class="t" style="left:246.30px;top:79px;font-size:10.6px;line-height:10.6px;color:#f0f0f0;-webkit-text-stroke:0.2px #f0f0f0;transform:scaleX(0.8455);transform-origin:0 0">11</div>
<div class="t" style="left:284.00px;top:77px;font-size:13.6px;line-height:13.6px;color:#e8e8e8;-webkit-text-stroke:0.2px #e8e8e8;transform:scaleX(0.9914);transform-origin:0 0">A</div>
<div class="t" style="left:306.50px;top:79px;font-size:10.6px;line-height:10.6px;color:#e8e8e8;-webkit-text-stroke:0.2px #e8e8e8;transform:scaleX(1.0596);transform-origin:0 0">A</div>
<div class="t" style="left:149.90px;top:104px;font-size:11px;line-height:11px;color:#e8e8e8;font-weight:bold;-webkit-text-stroke:0.2px #e8e8e8;transform:scaleX(0.8299);transform-origin:0 0">B</div>
<div class="t" style="left:171.75px;top:104px;font-size:11.5px;line-height:11.5px;color:#d8d8d8;font-family:'Liberation Serif',serif;font-style:italic;-webkit-text-stroke:0.2px #d8d8d8;transform:scaleX(1.3008);transform-origin:0 0">I</div>
<div class="t" style="left:191.00px;top:103px;font-size:10.6px;line-height:10.6px;color:#d8d8d8;-webkit-text-stroke:0.2px #d8d8d8;transform:scaleX(1.0449);transform-origin:0 0">U</div>
<div class="t" style="left:295.60px;top:103px;font-size:11.8px;line-height:11.8px;color:#dedede;-webkit-text-stroke:0.2px #dedede;transform:scaleX(0.9397);transform-origin:0 0">A</div>
<div class="t" style="left:496.20px;top:73px;font-size:10px;line-height:10px;color:#f0f0f0;-webkit-text-stroke:0.2px #f0f0f0;transform:scaleX(0.9022);transform-origin:0 0">General</div>
<div class="t" style="left:531.20px;top:92px;font-size:14px;line-height:14px;color:#e6e6e6;-webkit-text-stroke:0px;transform:scaleX(0.9797);transform-origin:0 0">%</div>
<div class="t" style="left:600.75px;top:73px;font-size:10px;line-height:10px;color:#f0f0f0;-webkit-text-stroke:0.2px #f0f0f0;transform:scaleX(0.9865);transform-origin:0 0">Conditional Formatting</div>
<div class="t" style="left:600.75px;top:94px;font-size:10px;line-height:10px;color:#f0f0f0;-webkit-text-stroke:0.2px #f0f0f0;transform:scaleX(0.9404);transform-origin:0 0">Format as Table</div>
<div class="t" style="left:600.75px;top:115px;font-size:10px;line-height:10px;color:#f0f0f0;-webkit-text-stroke:0.2px #f0f0f0;transform:scaleX(0.9418);transform-origin:0 0">Cell Styles</div>
<div class="t" style="left:749.90px;top:73px;font-size:10px;line-height:10px;color:#f0f0f0;-webkit-text-stroke:0.2px #f0f0f0;transform:scaleX(0.9434);transform-origin:0 0">Insert</div>
<div class="t" style="left:749.90px;top:94px;font-size:10px;line-height:10px;color:#f0f0f0;-webkit-text-stroke:0.2px #f0f0f0;transform:scaleX(0.9168);transform-origin:0 0">Delete</div>
<div class="t" style="left:749.90px;top:114px;font-size:10px;line-height:10px;color:#f0f0f0;-webkit-text-stroke:0.2px #f0f0f0;transform:scaleX(0.9662);transform-origin:0 0">Format</div>
<div class="t" style="left:11.25px;top:158px;font-size:10px;line-height:10px;color:#f2f2f2;-webkit-text-stroke:0.2px #f2f2f2;transform:scaleX(0.9468);transform-origin:0 0">P14</div>
<div class="t" style="left:149.80px;top:156px;font-size:12px;line-height:12px;color:#e6e6e6;font-family:'Liberation Serif',serif;font-style:italic;-webkit-text-stroke:0.2px #e6e6e6;transform:scaleX(1.2400);transform-origin:0 0">fx</div>
<div class="t" style="left:58.73px;top:181px;font-size:10.4px;line-height:10.4px;color:#e0e0e0;-webkit-text-stroke:0.2px #e0e0e0;transform:scaleX(0.9200);transform-origin:0 0">A</div>
<div class="t" style="left:130.98px;top:181px;font-size:10.4px;line-height:10.4px;color:#e0e0e0;-webkit-text-stroke:0.2px #e0e0e0;transform:scaleX(0.9200);transform-origin:0 0">B</div>
<div class="t" style="left:206.84px;top:181px;font-size:10.4px;line-height:10.4px;color:#e0e0e0;-webkit-text-stroke:0.2px #e0e0e0;transform:scaleX(0.9200);transform-origin:0 0">C</div>
<div class="t" style="left:278.47px;top:181px;font-size:10.4px;line-height:10.4px;color:#e0e0e0;-webkit-text-stroke:0.2px #e0e0e0;transform:scaleX(0.9200);transform-origin:0 0">D</div>
<div class="t" style="left:332.61px;top:181px;font-size:10.4px;line-height:10.4px;color:#e0e0e0;-webkit-text-stroke:0.2px #e0e0e0;transform:scaleX(0.9200);transform-origin:0 0">E</div>
<div class="t" style="left:385.00px;top:181px;font-size:10.4px;line-height:10.4px;color:#e0e0e0;-webkit-text-stroke:0.2px #e0e0e0;transform:scaleX(0.9200);transform-origin:0 0">F</div>
<div class="t" style="left:430.33px;top:181px;font-size:10.4px;line-height:10.4px;color:#e0e0e0;-webkit-text-stroke:0.2px #e0e0e0;transform:scaleX(0.9200);transform-origin:0 0">G</div>
<div class="t" style="left:469.72px;top:181px;font-size:10.4px;line-height:10.4px;color:#e0e0e0;-webkit-text-stroke:0.2px #e0e0e0;transform:scaleX(0.9200);transform-origin:0 0">H</div>
<div class="t" style="left:529.35px;top:181px;font-size:10.4px;line-height:10.4px;color:#e0e0e0;-webkit-text-stroke:0.2px #e0e0e0;transform:scaleX(0.9200);transform-origin:0 0">I</div>
<div class="t" style="left:592.66px;top:181px;font-size:10.4px;line-height:10.4px;color:#e0e0e0;-webkit-text-stroke:0.2px #e0e0e0;transform:scaleX(0.9200);transform-origin:0 0">J</div>
<div class="t" style="left:643.98px;top:181px;font-size:10.4px;line-height:10.4px;color:#e0e0e0;-webkit-text-stroke:0.2px #e0e0e0;transform:scaleX(0.9200);transform-origin:0 0">K</div>
<div class="t" style="left:696.64px;top:181px;font-size:10.4px;line-height:10.4px;color:#e0e0e0;-webkit-text-stroke:0.2px #e0e0e0;transform:scaleX(0.9200);transform-origin:0 0">L</div>
<div class="t" style="left:747.57px;top:181px;font-size:10.4px;line-height:10.4px;color:#e0e0e0;-webkit-text-stroke:0.2px #e0e0e0;transform:scaleX(0.9200);transform-origin:0 0">M</div>
<div class="t" style="left:800.59px;top:181px;font-size:10.4px;line-height:10.4px;color:#e0e0e0;-webkit-text-stroke:0.2px #e0e0e0;transform:scaleX(0.9200);transform-origin:0 0">N</div>
<div class="t" style="left:8.36px;top:196px;font-size:10.4px;line-height:10.4px;color:#e0e0e0;-webkit-text-stroke:0.2px #e0e0e0;transform:scaleX(0.8800);transform-origin:0 0">1</div>
<div class="t" style="left:8.36px;top:212px;font-size:10.4px;line-height:10.4px;color:#e0e0e0;-webkit-text-stroke:0.2px #e0e0e0;transform:scaleX(0.8800);transform-origin:0 0">2</div>
<div class="t" style="left:8.36px;top:227px;font-size:10.4px;line-height:10.4px;color:#e0e0e0;-webkit-text-stroke:0.2px #e0e0e0;transform:scaleX(0.8800);transform-origin:0 0">3</div>
<div class="t" style="left:8.36px;top:243px;font-size:10.4px;line-height:10.4px;color:#e0e0e0;-webkit-text-stroke:0.2px #e0e0e0;transform:scaleX(0.8800);transform-origin:0 0">4</div>
<div class="t" style="left:8.36px;top:259px;font-size:10.4px;line-height:10.4px;color:#e0e0e0;-webkit-text-stroke:0.2px #e0e0e0;transform:scaleX(0.8800);transform-origin:0 0">5</div>
<div class="t" style="left:8.36px;top:275px;font-size:10.4px;line-height:10.4px;color:#e0e0e0;-webkit-text-stroke:0.2px #e0e0e0;transform:scaleX(0.8800);transform-origin:0 0">6</div>
<div class="t" style="left:8.36px;top:291px;font-size:10.4px;line-height:10.4px;color:#e0e0e0;-webkit-text-stroke:0.2px #e0e0e0;transform:scaleX(0.8800);transform-origin:0 0">7</div>
<div class="t" style="left:8.36px;top:306px;font-size:10.4px;line-height:10.4px;color:#e0e0e0;-webkit-text-stroke:0.2px #e0e0e0;transform:scaleX(0.8800);transform-origin:0 0">8</div>
<div class="t" style="left:8.36px;top:322px;font-size:10.4px;line-height:10.4px;color:#e0e0e0;-webkit-text-stroke:0.2px #e0e0e0;transform:scaleX(0.8800);transform-origin:0 0">9</div>
<div class="t" style="left:5.81px;top:338px;font-size:10.4px;line-height:10.4px;color:#e0e0e0;-webkit-text-stroke:0.2px #e0e0e0;transform:scaleX(0.8800);transform-origin:0 0">10</div>
<div class="t" style="left:6.15px;top:354px;font-size:10.4px;line-height:10.4px;color:#e0e0e0;-webkit-text-stroke:0.2px #e0e0e0;transform:scaleX(0.8800);transform-origin:0 0">11</div>
<div class="t" style="left:5.81px;top:369px;font-size:10.4px;line-height:10.4px;color:#e0e0e0;-webkit-text-stroke:0.2px #e0e0e0;transform:scaleX(0.8800);transform-origin:0 0">12</div>
<div class="t" style="left:5.81px;top:385px;font-size:10.4px;line-height:10.4px;color:#e0e0e0;-webkit-text-stroke:0.2px #e0e0e0;transform:scaleX(0.8800);transform-origin:0 0">13</div>
<div class="t" style="left:5.81px;top:401px;font-size:10.4px;line-height:10.4px;color:#e0e0e0;-webkit-text-stroke:0.2px #e0e0e0;transform:scaleX(0.8800);transform-origin:0 0">14</div>
<div class="t" style="left:5.81px;top:417px;font-size:10.4px;line-height:10.4px;color:#e0e0e0;-webkit-text-stroke:0.2px #e0e0e0;transform:scaleX(0.8800);transform-origin:0 0">15</div>
<div class="t" style="left:5.81px;top:433px;font-size:10.4px;line-height:10.4px;color:#e0e0e0;-webkit-text-stroke:0.2px #e0e0e0;transform:scaleX(0.8800);transform-origin:0 0">16</div>
<div class="t" style="left:5.81px;top:448px;font-size:10.4px;line-height:10.4px;color:#e0e0e0;-webkit-text-stroke:0.2px #e0e0e0;transform:scaleX(0.8800);transform-origin:0 0">17</div>
<div class="t" style="left:5.81px;top:464px;font-size:10.4px;line-height:10.4px;color:#e0e0e0;-webkit-text-stroke:0.2px #e0e0e0;transform:scaleX(0.8800);transform-origin:0 0">18</div>
<div class="t" style="left:5.81px;top:480px;font-size:10.4px;line-height:10.4px;color:#e0e0e0;-webkit-text-stroke:0.2px #e0e0e0;transform:scaleX(0.8800);transform-origin:0 0">19</div>
<div class="t" style="left:5.81px;top:496px;font-size:10.4px;line-height:10.4px;color:#e0e0e0;-webkit-text-stroke:0.2px #e0e0e0;transform:scaleX(0.8800);transform-origin:0 0">20</div>
<div class="t" style="left:96.60px;top:510px;font-size:10.6px;line-height:10.6px;color:#1f1f1f;-webkit-text-stroke:0.35px #1f1f1f;transform:scaleX(1.0782);transform-origin:0 0">100-contacts</div>
<div class="t" style="left:6.00px;top:536px;font-size:9px;line-height:9px;color:#e6e6e6;-webkit-text-stroke:0.2px #e6e6e6;transform:scaleX(0.8649);transform-origin:0 0">Ready</div>
<div class="t" style="left:84.00px;top:536px;font-size:9px;line-height:9px;color:#e6e6e6;-webkit-text-stroke:0.2px #e6e6e6;transform:scaleX(0.9283);transform-origin:0 0">Accessibility: Good to go</div>
